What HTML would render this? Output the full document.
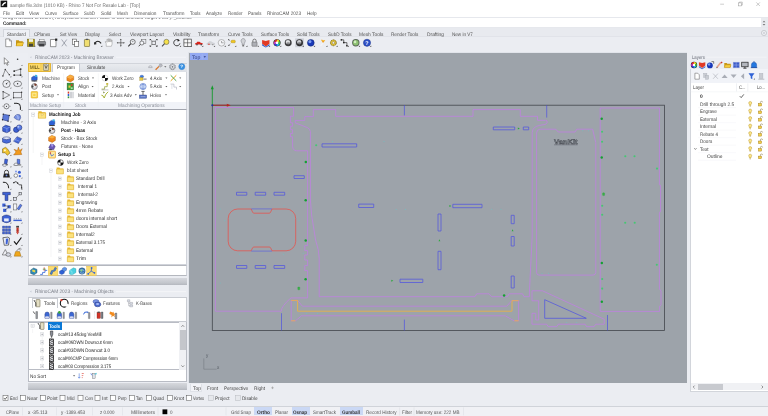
<!DOCTYPE html>
<html><head><meta charset="utf-8"><title>Rhino</title><style>
html,body{margin:0;padding:0}
body{text-rendering:geometricPrecision;width:768px;height:416px;overflow:hidden;position:relative;background:#ebedf2;font-family:"Liberation Sans",sans-serif;color:#333}
.b{position:absolute;box-sizing:border-box}
.t{position:absolute;white-space:nowrap;line-height:1;transform-origin:0 50%;transform:translateY(-50%) scale(.47);font-size:10px}
svg{position:absolute;left:0;top:0}
#all{position:absolute;left:0;top:0;width:768px;height:416px;overflow:hidden;will-change:transform}
</style></head><body><div id="all">
<div class="b" style="left:0px;top:0px;width:768px;height:16.6px;background:#fff;"></div>
<div class="b" style="left:0px;top:16.6px;width:768px;height:1.3px;background:#e6e8ed;"></div>
<div class="b" style="left:0px;top:17.9px;width:768px;height:9.4px;background:#fff;"></div>
<div class="b" style="left:760.6px;top:17.9px;width:7.4px;height:9.4px;background:#e9ebef;"></div>
<div class="b" style="left:0px;top:27.2px;width:768px;height:0.6px;background:#e6e8ed;"></div>
<div class="b" style="left:0;top:17.8px;width:300px;height:3px;overflow:hidden"><span class="t" style="left:3px;top:0.6px;transform:translateY(-50%) scale(.46);color:#555">Drag a window to zoom ( All Dynamic Extents Factor In Out Selected Target 1To1 ): _Extents</span></div>
<div class="b" style="left:0px;top:27.8px;width:768px;height:9px;background:#e8eaef;"></div>
<div class="b" style="left:0px;top:36.4px;width:768px;height:0.6px;background:#e1e3e9;"></div>
<div class="b" style="left:0px;top:37px;width:768px;height:15.6px;background:#ebedf2;"></div>
<div class="b" style="left:2.6px;top:29px;width:27px;height:8.2px;background:#eef0f5;border:0.5px solid #d3d6dc;border-bottom:none"></div>
<div class="b" style="left:190.4px;top:384px;width:12px;height:8px;background:#f3f4f8;border:0.5px solid #dfe2e8;border-top:none"></div>
<div class="b" style="left:0px;top:406.3px;width:768px;height:0.5px;background:#d0d3d9;"></div>
<div class="b" style="left:0px;top:406.8px;width:768px;height:9.2px;background:#f0f1f5;"></div>
<div class="b" style="left:254px;top:407.4px;width:18px;height:7.4px;background:#cad8f5;"></div>
<div class="b" style="left:291.5px;top:407.4px;width:18.0px;height:7.4px;background:#cad8f5;"></div>
<div class="b" style="left:339.5px;top:407.4px;width:23.0px;height:7.4px;background:#cad8f5;"></div>
<div class="b" style="left:0px;top:52.6px;width:27.6px;height:340px;background:#eceef3;"></div>
<div class="b" style="left:28px;top:62.6px;width:158.6px;height:9.6px;background:linear-gradient(#e9ebef,#dcdfe5);border-top:0.5px solid #d2d5db"></div>
<div class="b" style="left:28.2px;top:62.8px;width:23.2px;height:8.8px;background:#fbd968;border:0.6px solid #e3b534;border-radius:.8px"></div>
<div class="b" style="left:52.3px;top:62.8px;width:27.8px;height:9.8px;background:#fff;border:0.5px solid #c8ccd4;border-bottom:none;border-radius:.8px .8px 0 0"></div>
<div class="b" style="left:28px;top:72.2px;width:158.6px;height:29.6px;background:#fff;border-left:0.5px solid #d2d5db;border-right:0.5px solid #d2d5db"></div>
<div class="b" style="left:28px;top:101.8px;width:158.6px;height:7.4px;background:#f1f3f8;border-left:0.5px solid #d2d5db;border-right:0.5px solid #d2d5db"></div>
<div class="b" style="left:28px;top:109px;width:158.6px;height:155.8px;background:#fff;border:0.5px solid #d0d3da;border-top:0.8px solid #a2a5ae"></div>
<div class="b" style="left:28px;top:264.8px;width:158.6px;height:11.4px;background:#fff;border:0.5px solid #d0d3da;border-top:0.6px solid #b4b7be;border-bottom:0.6px solid #b4b7be"></div>
<div class="b" style="left:28px;top:277.6px;width:158.6px;height:7px;background:linear-gradient(#d6d8dd,#c3c6cc 70%,#b4b7be);"></div>
<div class="b" style="left:28px;top:296.9px;width:158.6px;height:25px;background:#fff;border:0.5px solid #c9ccd2"></div>
<div class="b" style="left:32.2px;top:297.6px;width:25.4px;height:10.9px;background:#fff;border:0.5px solid #c9ccd2;border-bottom:none"></div>
<div class="b" style="left:28px;top:321.9px;width:158.6px;height:48.4px;background:#fff;border:0.5px solid #b9bcc4"></div>
<div class="b" style="left:47.6px;top:322.4px;width:14.4px;height:7.6px;background:#0a78d6;"></div>
<div class="b" style="left:179.4px;top:322.4px;width:6.7px;height:47.4px;background:#f0f1f4;"></div>
<div class="b" style="left:179.8px;top:329.6px;width:5.9px;height:20px;background:#c4c6cb;"></div>
<div class="b" style="left:28px;top:370.3px;width:158.6px;height:11.4px;background:#fff;border:0.5px solid #b9bcc4;border-top:none"></div>
<div class="b" style="left:28px;top:383px;width:158.6px;height:6.6px;background:linear-gradient(#d6d8dd,#c3c6cc 70%,#b4b7be);"></div>
<div class="b" style="left:188.2px;top:52.4px;width:499px;height:330.6px;background:#9da3aa;border-left:1.2px solid #e1e4ea;border-top:0.6px solid #e1e4ea"></div>
<div class="b" style="left:189.6px;top:53.4px;width:18.6px;height:6.8px;background:#93a9f2;"></div>
<div class="b" style="left:690.2px;top:68.8px;width:78px;height:322px;background:#fff;border-left:0.5px solid #d2d5db;border-top:0.5px solid #d2d5db"></div>
<div class="b" style="left:690.6px;top:69.2px;width:77.4px;height:13.6px;background:#f1f3f8;"></div>
<div class="b" style="left:690.6px;top:383.4px;width:77.4px;height:7px;background:#f0f1f4;"></div>
<div class="b" style="left:697.6px;top:384.2px;width:25.6px;height:5.6px;background:#c8cacf;"></div>
<div class="b" style="left:690.2px;top:390.6px;width:78px;height:0.5px;background:#d2d5db;"></div>
<svg width="768" height="416" viewBox="0 0 768 416">
<rect x="0.6" y="0.6" width="6.6" height="6.6" fill="#111"/><path d="M1.6 5.8 q1.2-3.6 4.6-3.8 l-0.6 1.6 q-2 .3-2.4 2.2z" fill="#fff"/>
<path d="M720.2 4.2h3.8" stroke="#9a9a9a" stroke-width=".5"/><rect x="738.4" y="2.9" width="3" height="3" fill="none" stroke="#969696" stroke-width=".5"/><path d="M739.3 2.9v-.8h3v3h-.9" fill="none" stroke="#969696" stroke-width=".5"/><path d="M756.3 2.4l3.6 3.6m0-3.6l-3.6 3.6" stroke="#969696" stroke-width=".5"/>
<path d="M762.6 22.3l1.4-1.6 1.4 1.6zM762.6 24l1.4 1.6 1.4-1.6z" fill="#777"/>
<circle cx="764" cy="33" r="2.6" fill="#eceef2" stroke="#b0b3ba" stroke-width=".55"/><circle cx="764" cy="33" r=".8" fill="#b8bbc2"/>
<g transform="translate(8.50 42.80) scale(0.92)"><path d="M-3-4.2h4l2.2 2.2v6.2h-6.2z" fill="#fff" stroke="#555" stroke-width=".6"/><path d="M1-4.2v2.2h2.2" fill="none" stroke="#555" stroke-width=".5"/></g>
<g transform="translate(19.70 42.80) scale(0.92)"><path d="M-4-2.8h3l.8 1h3.6v5.2h-7.4z" fill="#c89612"/><path d="M-4 3.4l1.4-3.8h7l-1.6 3.8z" fill="#f6cc3c" stroke="#a87c08" stroke-width=".4"/></g>
<g transform="translate(31.00 42.80) scale(0.92)"><rect x="-3.8" y="-4" width="7.6" height="8" fill="#b9a21c" stroke="#55500f" stroke-width=".5"/><rect x="-2.2" y="-4" width="4.4" height="3" fill="#f2f2e6"/><rect x="-2.2" y="1" width="4.4" height="3" fill="#44453a"/><path d="M3 4.6l1.6 0 0-1.6z" fill="#555"/></g>
<g transform="translate(41.70 42.80) scale(0.92)"><rect x="-2.6" y="-3.8" width="5.2" height="3" fill="#f4f4f4" stroke="#555" stroke-width=".4"/><rect x="-4.2" y="-1.4" width="8.4" height="4" rx=".6" fill="#8a8c90" stroke="#3c3d40" stroke-width=".5"/><rect x="-2.8" y="1.2" width="5.6" height="2.8" fill="#3d3e42"/></g>
<g transform="translate(53.60 42.80) scale(0.92)"><path d="M-3.4-3.6h4.4l1.6 1.6v6.2h-6z" fill="#fff" stroke="#444" stroke-width=".6"/><rect x="1.6" y="-4.6" width="2.4" height="2.4" fill="#222"/></g>
<g transform="translate(64.20 42.80) scale(0.92)"><path d="M-2.8-3.6l5.4 7.4M2.8-3.6l-5.4 7.4" stroke="#7a7f8c" stroke-width=".7"/></g>
<g transform="translate(75.60 42.80) scale(0.92)"><rect x="-3.4" y="-4" width="4.4" height="5.6" fill="#fff" stroke="#444" stroke-width=".6"/><rect x="-1" y="-1.6" width="4.4" height="5.6" fill="#fff" stroke="#444" stroke-width=".6"/></g>
<g transform="translate(87.00 42.80) scale(0.92)"><rect x="-2.8" y="-3.6" width="5.6" height="7.6" rx=".6" fill="#f1df72" stroke="#5c5520" stroke-width=".6"/><rect x="-1.2" y="-4.4" width="2.4" height="1.4" fill="#555"/></g>
<g transform="translate(98.00 42.80) scale(0.92)"><path d="M-3.6 .6q3.4-4.4 7 0" fill="none" stroke="#222" stroke-width="1.1"/><path d="M-4.4-1l.4 3.2 2.8-1z" fill="#222"/><path d="M3 4.6l1.6 0 0-1.6z" fill="#555"/></g>
<g transform="translate(108.60 42.80) scale(0.92)"><path d="M-2.6 3.8v-3l-1.2-1.8 .8-.6 1.2 1.2v-3.4h1v2.6h.6v-3.2h1v3.2h.6v-2.8h1v3h.5v-2h.9v4.4l-.8 2.4z" fill="#fdfdfd" stroke="#777" stroke-width=".45"/></g>
<g transform="translate(120.80 42.80) scale(0.92)"><path d="M0-3.4v6.8M-3.4 0h6.8" stroke="#444" stroke-width=".7"/><path d="M0-4.4l-1 1.4h2zM0 4.4l-1-1.4h2zM-4.4 0l1.4-1v2zM4.4 0l-1.4-1v2z" fill="#444"/></g>
<g transform="translate(131.80 42.80) scale(0.92)"><circle cx="1" cy="-1" r="2.7" fill="#f4f6fa" stroke="#333" stroke-width=".7"/><path d="M-1 1l-2.8 2.8" stroke="#333" stroke-width="1.1"/><path d="M1-2.4v2M0-1.4h2" stroke="#555" stroke-width=".4"/></g>
<g transform="translate(142.40 42.80) scale(0.92)"><rect x="-1.2" y="-3.8" width="5" height="4.8" fill="none" stroke="#555" stroke-width=".5"/><circle cx="-.6" cy=".2" r="2.2" fill="#f4f6fa" stroke="#333" stroke-width=".6"/><path d="M-2.2 1.8l-1.8 2" stroke="#333" stroke-width=".9"/></g>
<g transform="translate(153.60 42.80) scale(0.92)"><path d="M-3.6-3.6l7.2 7.2M3.6-3.6l-7.2 7.2" stroke="#444" stroke-width=".5"/><rect x="-1.8" y="-1.8" width="3.6" height="3.6" fill="#eceef3" stroke="#333" stroke-width=".6"/><path d="M-4.2-4.2h1.8l-1.8 1.8zM4.2-4.2h-1.8l1.8 1.8zM-4.2 4.2h1.8l-1.8-1.8zM4.2 4.2h-1.8l1.8-1.8z" fill="#222"/></g>
<g transform="translate(165.50 42.80) scale(0.92)"><circle cx="1" cy="-1" r="2.8" fill="#f5e04a" stroke="#555" stroke-width=".6"/><path d="M-1 1l-2.8 2.8" stroke="#444" stroke-width="1.1"/></g>
<g transform="translate(176.80 42.80) scale(0.92)"><path d="M2.4-2.6a3.4 3.4 0 1 0 1 3.2" fill="none" stroke="#222" stroke-width=".9"/><path d="M.6-4.2l2.8 1.4-2.4 1.6z" fill="#222"/><path d="M3 4.6l1.6 0 0-1.6z" fill="#555"/></g>
<g transform="translate(187.60 42.80) scale(0.92)"><rect x="-4" y="-4" width="8" height="8" fill="#f8f8f8" stroke="#333" stroke-width=".7"/><path d="M0-4v8M-4 0h8" stroke="#333" stroke-width=".6"/><path d="M3 4.6l1.6 0 0-1.6z" fill="#555"/></g>
<g transform="translate(199.00 42.80) scale(0.92)"><path d="M-4.2 .6l1.4-.4.8-1.4h2.6l1.2 1.2 2.2.5v1.3h-8.2z" fill="#d8241c"/><circle cx="-2.2" cy="2" r=".8" fill="#333"/><circle cx="2.4" cy="2" r=".8" fill="#333"/><path d="M3 4.6l1.6 0 0-1.6z" fill="#555"/></g>
<g transform="translate(210.80 42.80) scale(0.92)"><path d="M-4.2 .6l1.4-.4.8-1.4h2.6l1.2 1.2 2.2.5v1.3h-8.2z" fill="#d4d6da" stroke="#a8aab0" stroke-width=".3"/><circle cx="-2" cy="1.6" r=".8" fill="#d63228"/><circle cx="2.2" cy="2" r=".7" fill="#888"/><path d="M3 4.6l1.6 0 0-1.6z" fill="#555"/></g>
<g transform="translate(221.50 42.80) scale(0.92)"><circle cx="0" cy="0" r="3.6" fill="#f4f5f8" stroke="#777" stroke-width=".5"/><path d="M0 0h2.4M0-2v2" stroke="#555" stroke-width=".5"/><path d="M3 4.6l1.6 0 0-1.6z" fill="#555"/></g>
<g transform="translate(232.00 42.80) scale(0.92)"><rect x="-1" y="-2.8" width="4.6" height="2.8" rx="1" fill="#f2c81e" stroke="#9a7a08" stroke-width=".4"/><path d="M-3.6-3.4l1.6 1.6M-3.6 2.6l2-1.6" stroke="#666" stroke-width=".5"/><circle cx="-3.6" cy="-3.4" r=".7" fill="#555"/><circle cx="-3.4" cy="2.8" r=".7" fill="#555"/><path d="M3 4.6l1.6 0 0-1.6z" fill="#555"/></g>
<g transform="translate(243.20 42.80) scale(0.92)"><path d="M-2.2-1.6a2.3 2.3 0 1 1 4.4 0q-.2 1-1 2v1.6h-2.4v-1.6q-.8-1-1-2z" fill="#d2d4d8" stroke="#6a6c72" stroke-width=".5"/><rect x="-1" y="2.4" width="2" height="1.6" fill="#777"/><path d="M3 4.6l1.6 0 0-1.6z" fill="#555"/></g>
<g transform="translate(254.50 42.80) scale(0.92)"><path d="M-1.8-.6v-1.6a1.8 1.8 0 0 1 3.6 0v1.6" fill="none" stroke="#555" stroke-width=".8"/><rect x="-2.8" y="-.8" width="5.6" height="4.6" rx=".6" fill="#aeb0b6" stroke="#555" stroke-width=".5"/><path d="M3 4.6l1.6 0 0-1.6z" fill="#555"/></g>
<g transform="translate(265.80 42.80) scale(0.92)"><path d="M-4-3l4 1 4-1v4l-4 3-4-3z" fill="#e23a24"/><path d="M-4 1.4l4 2.8 4-2.8v1.4l-4 2.4-4-2.4z" fill="#2a58c8"/><path d="M3 4.6l1.6 0 0-1.6z" fill="#555"/></g>
<g transform="translate(277.00 42.80) scale(0.92)"><circle r="3.9" fill="#222"/><path d="M0 0L0-3.5A3.5 3.5 0 0 1 3.03-1.75z" fill="#e8e020"/><path d="M0 0L3.03-1.75A3.5 3.5 0 0 1 3.03 1.75z" fill="#40c040"/><path d="M0 0L3.03 1.75A3.5 3.5 0 0 1 0 3.5z" fill="#20b8d8"/><path d="M0 0L0 3.5A3.5 3.5 0 0 1-3.03 1.75z" fill="#3040e0"/><path d="M0 0L-3.03 1.75A3.5 3.5 0 0 1-3.03-1.75z" fill="#c030c8"/><path d="M0 0L-3.03-1.75A3.5 3.5 0 0 1 0-3.5z" fill="#e83030"/><circle r="1.5" fill="#fff"/><path d="M3 4.6l1.6 0 0-1.6z" fill="#555"/></g>
<g transform="translate(288.20 42.80) scale(0.92)"><circle r="3.8" fill="#3c3c3e"/><ellipse cx="-.3" cy="-.9" rx="2.5" ry="2.2" fill="#dedfe2"/><ellipse cx="0" cy=".6" rx="2" ry="1.2" fill="#8a8b8e"/></g>
<g transform="translate(299.50 42.80) scale(0.92)"><rect x="-4.8" y="-4.8" width="9.6" height="9.6" fill="#cdd0d8"/><circle r="3.8" fill="#2e2e30"/><ellipse cx="-.3" cy="-.9" rx="2.4" ry="2.1" fill="#cfd0d4"/><ellipse cx="0" cy=".6" rx="2" ry="1.2" fill="#77787c"/><path d="M3 4.6l1.6 0 0-1.6z" fill="#555"/></g>
<g transform="translate(310.80 42.80) scale(0.92)"><circle r="3.7" fill="#1838b8"/><circle cx="-1" cy="-1.3" r="1.7" fill="#7c9cf0"/><circle r="3.7" fill="none" stroke="#0c1c60" stroke-width=".5"/><path d="M3 4.6l1.6 0 0-1.6z" fill="#555"/></g>
<g transform="translate(323.20 42.80) scale(0.92)"><path d="M-2.4-3.4l4.6.6-2.4 3z" fill="#f0a020"/><path d="M-2.4-3.4l4.6.6-2 .6z" fill="#f8d860"/><path d="M-.4.4l-2.4 3" stroke="#f4f5f8" stroke-width="1.2"/><path d="M3 4.6l1.6 0 0-1.6z" fill="#555"/></g>
<g transform="translate(333.40 42.80) scale(0.92)"><circle r="3.2" fill="#e2c23a" stroke="#6a5a10" stroke-width="1" stroke-dasharray="1.2 .8"/><circle r="1.3" fill="#eceef3" stroke="#6a5a10" stroke-width=".4"/><path d="M3 4.6l1.6 0 0-1.6z" fill="#555"/></g>
<g transform="translate(344.50 42.80) scale(0.92)"><path d="M-3.4-3.2h2.6v3h3.4v3.2" fill="none" stroke="#222" stroke-width=".7"/><rect x="-4.2" y="-4" width="1.6" height="1.6" fill="#222"/><rect x="1.8" y="2.4" width="1.6" height="1.6" fill="#222"/><rect x="-1.6" y="-1" width="1.6" height="1.6" fill="#222"/><path d="M3 4.6l1.6 0 0-1.6z" fill="#555"/></g>
<g transform="translate(355.80 42.80) scale(0.92)"><circle r="4" fill="#5a665a"/><circle r="3" fill="#8cc070"/><circle cx="-.8" cy="-1" r="1.4" fill="#d2ecc0"/><path d="M3 4.6l1.6 0 0-1.6z" fill="#555"/></g>
<g transform="translate(367.00 42.80) scale(0.92)"><circle r="3.9" fill="#2c50c8"/><circle r="3.9" fill="none" stroke="#162c80" stroke-width=".5"/><text x="0" y="2.1" font-size="6" font-weight="bold" text-anchor="middle" fill="#fff" font-family="Liberation Sans,sans-serif">?</text><path d="M3 4.6l1.6 0 0-1.6z" fill="#555"/></g>
<path d="M271.2 387.8h2.6M272.5 386.5v2.6" stroke="#999" stroke-width=".6"/>
<rect x="3.0" y="395.6" width="5" height="5" fill="#fff" stroke="#555" stroke-width=".5"/>
<path d="M4.0 398.1l1.1 1.3 2-2.6" fill="none" stroke="#222" stroke-width=".7"/>
<rect x="20.5" y="395.6" width="5" height="5" fill="#fff" stroke="#555" stroke-width=".5"/>
<rect x="40.5" y="395.6" width="5" height="5" fill="#fff" stroke="#555" stroke-width=".5"/>
<rect x="60.0" y="395.6" width="5" height="5" fill="#fff" stroke="#555" stroke-width=".5"/>
<rect x="78.0" y="395.6" width="5" height="5" fill="#fff" stroke="#555" stroke-width=".5"/>
<rect x="95.0" y="395.6" width="5" height="5" fill="#fff" stroke="#555" stroke-width=".5"/>
<rect x="110.5" y="395.6" width="5" height="5" fill="#fff" stroke="#555" stroke-width=".5"/>
<rect x="129.5" y="395.6" width="5" height="5" fill="#fff" stroke="#555" stroke-width=".5"/>
<rect x="146.5" y="395.6" width="5" height="5" fill="#fff" stroke="#555" stroke-width=".5"/>
<rect x="167.5" y="395.6" width="5" height="5" fill="#fff" stroke="#555" stroke-width=".5"/>
<rect x="186.5" y="395.6" width="5" height="5" fill="#fff" stroke="#555" stroke-width=".5"/>
<rect x="208.5" y="395.6" width="5" height="5" fill="#e6e8ec" stroke="#b8bac0" stroke-width=".5"/>
<rect x="235.5" y="395.6" width="5" height="5" fill="#e6e8ec" stroke="#b8bac0" stroke-width=".5"/>
<rect x="162.5" y="409.4" width="4.8" height="4.8" fill="#000"/>
<path d="M22.5 407.4v8" stroke="#dadce2" stroke-width=".5"/>
<path d="M56.5 407.4v8" stroke="#dadce2" stroke-width=".5"/>
<path d="M92.5 407.4v8" stroke="#dadce2" stroke-width=".5"/>
<path d="M122.5 407.4v8" stroke="#dadce2" stroke-width=".5"/>
<path d="M158 407.4v8" stroke="#dadce2" stroke-width=".5"/>
<path d="M226 407.4v8" stroke="#dadce2" stroke-width=".5"/>
<path d="M399.6 407.4v8" stroke="#dadce2" stroke-width=".5"/>
<path d="M414 407.4v8" stroke="#dadce2" stroke-width=".5"/>
<path d="M463.5 407.4v8" stroke="#dadce2" stroke-width=".5"/>
<g transform="translate(6.50 61.30)"><path d="M-2.2-3.6v6.4l1.6-1.4 1.2 2.6 1-.5-1.2-2.5h2z" fill="#fff" stroke="#333" stroke-width=".5"/></g>
<g transform="translate(17.60 61.30)"><circle cx="0" cy="-2" r=".8" fill="#333"/><path d="M3.4 4.8l1.4 0 0-1.4z" fill="#555"/></g>
<g transform="translate(6.50 72.55)"><path d="M-3.6 3.4l2.4-6.4 4 5.2" fill="none" stroke="#333" stroke-width=".5"/><circle cx="-3.6" cy="3.4" r=".7" fill="#333"/><circle cx="-1.2" cy="-3" r=".7" fill="#333"/><circle cx="2.8" cy="2.2" r=".7" fill="#333"/><path d="M3.4 4.8l1.4 0 0-1.4z" fill="#555"/></g>
<g transform="translate(17.60 72.55)"><path d="M-3.4-1.4q3-1 6.2-2M-3.4 2.6h6.4M3 -3.4v6" fill="none" stroke="#333" stroke-width=".5"/><rect x="-4.2" y="-2.2" width="1.6" height="1.6" fill="#333"/><rect x="2.2" y="-4.2" width="1.6" height="1.6" fill="#333"/><rect x="-4.2" y="1.8" width="1.6" height="1.6" fill="#333"/><rect x="2.2" y="1.8" width="1.6" height="1.6" fill="#333"/><path d="M3.4 4.8l1.4 0 0-1.4z" fill="#555"/></g>
<g transform="translate(6.50 83.80)"><circle r="3.7" fill="none" stroke="#333" stroke-width=".55"/><circle r=".7" fill="#333"/><path d="M0 0l2.4-2.4" stroke="#333" stroke-width=".4"/><path d="M3.4 4.8l1.4 0 0-1.4z" fill="#555"/></g>
<g transform="translate(17.60 83.80)"><ellipse rx="4" ry="2.8" fill="none" stroke="#333" stroke-width=".55"/><circle r=".7" fill="#333"/><path d="M3.4 4.8l1.4 0 0-1.4z" fill="#555"/></g>
<g transform="translate(6.50 95.05)"><path d="M-3.4-3.4l6.6 3.4-6.6 3.6z" fill="none" stroke="#333" stroke-width=".55"/><circle cx="-3.4" cy="-3.4" r=".7" fill="#333"/><circle cx="-3.4" cy="3.6" r=".7" fill="#333"/><path d="M3.4 4.8l1.4 0 0-1.4z" fill="#555"/></g>
<g transform="translate(17.60 95.05)"><rect x="-4" y="-2.8" width="8" height="5.6" fill="none" stroke="#333" stroke-width=".55"/><circle cx="-4" cy="2.8" r=".7" fill="#333"/><circle cx="4" cy="-2.8" r=".7" fill="#333"/><path d="M3.4 4.8l1.4 0 0-1.4z" fill="#555"/></g>
<g transform="translate(6.50 106.30)"><circle r="2.6" fill="none" stroke="#333" stroke-width=".55"/><circle r=".6" fill="#333"/><path d="M-4.2 0h1M3.2 0h1" stroke="#333" stroke-width=".4"/><path d="M3.4 4.8l1.4 0 0-1.4z" fill="#555"/></g>
<g transform="translate(17.60 106.30)"><path d="M-3.6-3h3q3.4 0 3.4 3.4v3.2" fill="none" stroke="#222" stroke-width="1"/><path d="M3.4 4.8l1.4 0 0-1.4z" fill="#555"/></g>
<g transform="translate(6.50 117.55)"><path d="M-3.2-3.4l6 1.2-1.2 5.8-5.6-1.4z" fill="#5a78d8" stroke="#1c2c70" stroke-width=".5"/><circle cx="-3.2" cy="-3.4" r=".7" fill="#222"/><circle cx="2.8" cy="-2.2" r=".7" fill="#222"/><circle cx="1.6" cy="3.6" r=".7" fill="#222"/><circle cx="-4" cy="2.2" r=".7" fill="#222"/><path d="M3.4 4.8l1.4 0 0-1.4z" fill="#555"/></g>
<g transform="translate(17.60 117.55)"><path d="M-3.6 0q2-4.4 6-2.6 1.6 2.6-.6 5.4-3.4-.6-5.4-2.8z" fill="#7a94e4" stroke="#2a3c88" stroke-width=".5"/><path d="M-1-2.6q2 1.4 1.6 4.6" fill="none" stroke="#d8e0fa" stroke-width=".6"/><path d="M3.4 4.8l1.4 0 0-1.4z" fill="#555"/></g>
<g transform="translate(6.50 128.80)"><path d="M-3.8-1.8l3-1.8 4.4 1.4v4.4l-3.2 1.8-4.2-1.6z" fill="#3c60d4" stroke="#142060" stroke-width=".5"/><path d="M-3.8-1.8l4.2 1.4 3.2-1.4M.4-.4v4.4" fill="none" stroke="#a8bcf4" stroke-width=".5"/><path d="M3.4 4.8l1.4 0 0-1.4z" fill="#555"/></g>
<g transform="translate(17.60 128.80)"><circle cx="-1.4" cy="1" r="2.7" fill="#3c60d4" stroke="#142060" stroke-width=".5"/><circle cx="1.6" cy="-1.2" r="2.7" fill="#5a7ce4" stroke="#142060" stroke-width=".5"/><circle cx=".8" cy="-2" r="1" fill="#b8c8f8"/><path d="M3.4 4.8l1.4 0 0-1.4z" fill="#555"/></g>
<g transform="translate(6.50 140.05)"><ellipse cy="-1.6" rx="4" ry="1.6" fill="#dfe6fa" stroke="#223478" stroke-width=".5"/><path d="M-4-1.6v3.6q4 2.6 8 0v-3.6q-4 2.6-8 0z" fill="#4668d8" stroke="#223478" stroke-width=".5"/><path d="M3.4 4.8l1.4 0 0-1.4z" fill="#555"/></g>
<g transform="translate(17.60 140.05)"><path d="M-4 1.2l3.4-4.6 4.6 2-3.2 4.8z" fill="#4668d8" stroke="#223478" stroke-width=".5"/><path d="M-2.4-.6l4.6 2M-.8-2.4l-2.6 4" stroke="#b4c4f6" stroke-width=".4"/><path d="M3.4 4.8l1.4 0 0-1.4z" fill="#555"/></g>
<g transform="translate(6.50 151.30)"><path d="M-4-2.4l3-1.6 2 1.6 2.6 4-2.8 2.4-2.2-2.6-2.6.2z" fill="#f0c430" stroke="#6a5208" stroke-width=".5"/><circle cx="-1.6" cy="-1" r="1.1" fill="#fff6c8"/><path d="M3.4 4.8l1.4 0 0-1.4z" fill="#555"/></g>
<g transform="translate(17.60 151.30)"><path d="M-4 3.6l2.4-3-2-2.6 3.4 1.2 1-3.4 1.2 3.4 2.6-1.8-1.4 3.2 1 2.6z" fill="#f29a1c" stroke="#9a5408" stroke-width=".4"/></g>
<g transform="translate(6.50 162.55)"><path d="M-4 2.2h5.4" stroke="#222" stroke-width=".8"/><path d="M-1.6-3.6l2.8.6-.8 4.4-2.6-.4z" fill="#3c60d4" stroke="#142060" stroke-width=".4"/><ellipse cx="-2" cy="2.6" rx="2" ry="1.2" fill="#e8ecf8" stroke="#333" stroke-width=".4"/><path d="M3.4 4.8l1.4 0 0-1.4z" fill="#555"/></g>
<g transform="translate(17.60 162.55)"><path d="M-4 2.4h7.6" stroke="#222" stroke-width=".7"/><path d="M-.4-3.4l2.6.4v4.4l-2.6-.2z" fill="#5a7ce4" stroke="#142060" stroke-width=".4"/><ellipse cx="-1.6" cy="1.8" rx="1.8" ry="1.3" fill="#eef0f8" stroke="#333" stroke-width=".4"/><path d="M3.4 4.8l1.4 0 0-1.4z" fill="#555"/></g>
<g transform="translate(6.50 173.80)"><path d="M-2-.2v-1.4a2 2 0 0 1 4 0v1.4" fill="none" stroke="#222" stroke-width=".8"/><path d="M-3.4 3.6l.8-4h5.2l.8 4z" fill="#222"/><circle cy="1.6" r=".9" fill="#7a94e4"/><path d="M3.4 4.8l1.4 0 0-1.4z" fill="#555"/></g>
<g transform="translate(17.60 173.80)"><circle cx="-1.8" cy="1.8" r="1.8" fill="#fff" stroke="#333" stroke-width=".5"/><circle cx="1.8" cy="-1.6" r="1.5" fill="#3c60d4"/><circle cx="2.2" cy="2.4" r="1.1" fill="#3c60d4"/><circle cx="-1.6" cy="-2.4" r="1" fill="#8098e8"/><path d="M3.4 4.8l1.4 0 0-1.4z" fill="#555"/></g>
<g transform="translate(6.50 185.05)"><path d="M-3.6-2.8q5.4-.6 5.8 6" fill="none" stroke="#222" stroke-width="1"/><path d="M3.4 4.8l1.4 0 0-1.4z" fill="#555"/></g>
<g transform="translate(17.60 185.05)"><path d="M-3.8-2.4q2.4-2.4 3.8.4t4 1.8v3.2" fill="none" stroke="#444" stroke-width=".9"/><circle cx="-3.8" cy="-2.4" r=".7" fill="#222"/><circle cx="0" cy="-2" r=".7" fill="#222"/><circle cx="4" cy="3" r=".7" fill="#222"/><path d="M3.4 4.8l1.4 0 0-1.4z" fill="#555"/></g>
<g transform="translate(6.50 196.30)"><path d="M-3.8-4h7.6v2.4h-2.4v5.8h-2.8v-5.8h-2.4z" fill="#3c60d4" stroke="#142060" stroke-width=".5"/><path d="M3.4 4.8l1.4 0 0-1.4z" fill="#555"/></g>
<g transform="translate(17.60 196.30)"><path d="M-2.4 2.4l4.8-4.8" stroke="#555" stroke-width=".5"/><rect x="-4.2" y="1" width="3" height="3" fill="#dfe3ee" stroke="#333" stroke-width=".5"/><rect x="1.4" y="-4" width="2.6" height="2.6" fill="#dfe3ee" stroke="#333" stroke-width=".5"/><path d="M3.4 4.8l1.4 0 0-1.4z" fill="#555"/></g>
<g transform="translate(6.50 207.55)"><rect x="-4.2" y="-4" width="3.2" height="3.2" fill="#3c60d4"/><rect x="1" y="-2.4" width="3.2" height="3.2" fill="#3c60d4"/><rect x="-3.4" y="1.2" width="3.2" height="3.2" fill="#3c60d4"/><path d="M-2.6-2.4l5.2 1.6-4.4 3.6" fill="none" stroke="#222" stroke-width=".5"/><path d="M3.4 4.8l1.4 0 0-1.4z" fill="#555"/></g>
<g transform="translate(17.60 207.55)"><rect x="-4" y="-3.6" width="3.2" height="6" fill="#f4f5f8" stroke="#555" stroke-width=".5"/><path d="M-.4 1.2l3-4.6 1.8 1.2-3 4.6z" fill="#5a7ce4" stroke="#142060" stroke-width=".4"/><path d="M3.4 4.8l1.4 0 0-1.4z" fill="#555"/></g>
<g transform="translate(6.50 218.80)"><path d="M-4.2-2.2q4-3.2 8.4 0v4.6q-4.2 3-8.4 0z" fill="#3c60d4" stroke="#142060" stroke-width=".5"/><path d="M-2.4-.4h4.6v3h-4.6z" fill="#e8ecfa"/><path d="M3.4 4.8l1.4 0 0-1.4z" fill="#555"/></g>
<g transform="translate(17.60 218.80)"><path d="M-4.2 1.6h8.4" stroke="#3c60d4" stroke-width="1.4"/><path d="M-3.4-.8v1.4M-1.2-.8v1.4M1-.8v1.4M3.2-.8v1.4" stroke="#555" stroke-width=".4"/><path d="M3.4 4.8l1.4 0 0-1.4z" fill="#555"/></g>
<g transform="translate(6.50 230.05)"><path d="M-4-4h2.2v2.2h-2.2zM-1.1-4h2.2v2.2h-2.2zM1.8-4h2.2v2.2h-2.2zM-4-1.1h2.2v2.2h-2.2zM-1.1-1.1h2.2v2.2h-2.2zM1.8-1.1h2.2v2.2h-2.2zM-4 1.8h2.2v2.2h-2.2zM-1.1 1.8h2.2v2.2h-2.2zM1.8 1.8h2.2v2.2h-2.2z" fill="#4668d8" stroke="#1c2c70" stroke-width=".3"/><path d="M3.4 4.8l1.4 0 0-1.4z" fill="#555"/></g>
<g transform="translate(17.60 230.05)"><rect x="-1.4" y="-4.2" width="2.8" height="1.8" fill="#444"/><rect x="-1" y="-2.4" width="2" height="5" fill="#d83a2c"/><path d="M-1.6-1h3.2M-1.6.6h3.2M-1.6 2.2h3.2" stroke="#7a1c14" stroke-width=".4"/><path d="M-1 2.6h2l-1 1.8z" fill="#d83a2c"/><path d="M3.4 4.8l1.4 0 0-1.4z" fill="#555"/></g>
<g transform="translate(6.50 241.30)"><path d="M-3.6-3.6l5-.6 1.6 1-1 7-4.2.2z" fill="#e9ecf6" stroke="#222" stroke-width=".6"/><path d="M-.6-2.6l2.4-.2-.8 5.6-1.8.1z" fill="#3c60d4"/><path d="M3.4 4.8l1.4 0 0-1.4z" fill="#555"/></g>
<g transform="translate(17.60 241.30)"><path d="M-3.6 0l2.4 3 5-6.8" fill="none" stroke="#1a1a1a" stroke-width="1.2"/><path d="M3.4 4.8l1.4 0 0-1.4z" fill="#555"/></g>
<g transform="translate(6.50 252.55)"><path d="M-4.2 2.4l3-5.4 2.8 5.4z" fill="#f0f1f6" stroke="#333" stroke-width=".5"/><ellipse cx="1.8" cy="2" rx="2.4" ry="1.8" fill="#d5d8e2" stroke="#333" stroke-width=".5"/><path d="M3.4 4.8l1.4 0 0-1.4z" fill="#555"/></g>
<g transform="translate(17.60 252.55)"><path d="M-3.4 3.6l1.4-4.6 4 0 1.4 4.6z" fill="#f0a81c" stroke="#8a5a08" stroke-width=".4"/><path d="M-1-1.6l2.6-2.6 1.4 1.4" fill="none" stroke="#333" stroke-width=".6"/><circle cx="2.6" cy="-3.4" r="1" fill="#f4f5f8" stroke="#444" stroke-width=".4"/><path d="M3.4 4.8l1.4 0 0-1.4z" fill="#555"/></g>
<path d="M30 57.2l1.4-1 0 2z" fill="#c4c8d2"/>
<path d="M116 57.3h70" stroke="#f8f9fc" stroke-width=".6"/>
<path d="M41 63.2v8" stroke="#e3b534" stroke-width=".5"/>
<g transform="translate(46.00 67.20)"><rect x="-2.6" y="-3.2" width="5.2" height="6.4" rx=".5" fill="#d9d4bc" stroke="#6b6242" stroke-width=".5"/><path d="M-1.2-2l1.2 3.2 1.4-3.2" fill="none" stroke="#3c3a2c" stroke-width=".7"/><circle cx="1.6" cy="-2.6" r=".8" fill="#f4f4f4" stroke="#666" stroke-width=".3"/></g>
<g transform="translate(150.40 66.80)"><path d="M-1.8.8q-.2-1.8 1.8-1.8t1.8 1.8z" fill="none" stroke="#8a8d94" stroke-width=".5"/></g>
<g transform="translate(158.60 66.80)"><path d="M-3 3l3.4-3.4" stroke="#d8742a" stroke-width="1.3"/><path d="M.2-.8l1-2.2 2 .4.6 1.8-2.2 1.2z" fill="#b9bcc4" stroke="#777" stroke-width=".3"/></g>
<path d="M164.2 66.3h2.2l-1.1 1.3z" fill="#555"/>
<g transform="translate(172.50 66.80)"><circle r="2.9" fill="none" stroke="#777a80" stroke-width="1" stroke-dasharray="1 .6"/><circle r="2.2" fill="#e8eaee" stroke="#777a80" stroke-width=".5"/><circle r=".9" fill="#777a80"/></g>
<g transform="translate(181.80 66.60)"><circle r="3.1" fill="#3a92e2"/><circle r="3.1" fill="none" stroke="#2a6cc0" stroke-width=".3"/><text y="1.7" font-size="4.8" font-weight="bold" text-anchor="middle" fill="#fff" font-family="Liberation Sans,sans-serif">?</text></g>
<path d="M63.6 73.4v34M98.3 73.4v34" stroke="#eceef2" stroke-width=".5"/>
<g transform="translate(34.40 78.10)"><path d="M-2.8-.6l2.2-1.6 3.4.8v3l-2.4 1.6-3.2-1z" fill="#2f62d6" stroke="#16307a" stroke-width=".4"/><path d="M-2.8 2.2h5.6v1.2h-5.6z" fill="#555"/><path d="M.6-3.4l2.2.4v2l-2.2-.4z" fill="#3ab0e8"/></g>
<g transform="translate(34.40 86.50)"><circle r="2.9" fill="#d8d9de" stroke="#444" stroke-width=".5"/><path d="M0 0L0-2.9A2.9 2.9 0 0 1 2.5-1.45z" fill="#7a3c2a"/><path d="M0 0L-2.5 1.45A2.9 2.9 0 0 1-2.5-1.45z" fill="#444"/><circle r=".9" fill="#f4f4f4"/></g>
<g transform="translate(34.40 94.80)"><rect x="-3.2" y="-3.2" width="6.4" height="6.4" rx=".6" fill="#f8d24a" stroke="#e0a81c" stroke-width=".6"/><rect x="-1.6" y="-1.6" width="3.2" height="3.2" fill="none" stroke="#fff3b8" stroke-width=".6"/></g>
<path d="M57 94.3h2l-1 1.2z" fill="#555"/>
<g transform="translate(70.30 78.10)"><path d="M-3.4-1.2l3.2-2 3.6 1.4v3.6l-3.2 2-3.6-1.4z" fill="#f08a1c" stroke="#a4540a" stroke-width=".4"/><path d="M-3.4-1.2l3.6 1.4 3.2-1.6" fill="none" stroke="#fbd08a" stroke-width=".6"/><path d="M-3.4-1.2l3.2-2 3.6 1.4-3.2 1.8z" fill="#f9b040"/></g>
<g transform="translate(70.30 86.50)"><rect x="-3.2" y="-3.4" width="6.4" height="6.8" fill="#3a9a3a" stroke="#1c5a1c" stroke-width=".4"/><rect x="-1.8" y="-1" width="2" height="2.2" fill="#e8c83c"/><rect x=".6" y="-2.4" width="1.6" height="1.8" fill="#d83a2c"/><rect x=".4" y=".8" width="2" height="1.8" fill="#a8e0a8"/></g>
<g transform="translate(70.30 94.80)"><rect x="-2.6" y="-3.2" width="1.5" height="2" fill="#d83a2c"/><rect x="-2.6" y="-.8" width="1.5" height="2" fill="#2f62d6"/><rect x="-2.6" y="1.6" width="1.5" height="1.8" fill="#3a9a3a"/><path d="M0-3v6.4M1.4-3v6.4M2.8-3v6.4" stroke="#9a9da6" stroke-width=".6"/></g>
<path d="M92 77.6h2l-1 1.2z" fill="#555"/>
<path d="M91.6 86.0h2l-1 1.2z" fill="#555"/>
<g transform="translate(105.00 78.10)"><circle r="3" fill="#fff" stroke="#999" stroke-width=".3"/><path d="M0 0v-3a3 3 0 0 0-3 3zM0 0v3a3 3 0 0 0 3-3z" fill="#111"/></g>
<g transform="translate(105.00 86.50)"><path d="M-3.4 2.6h3v-2.4h2.6v-2.2" fill="none" stroke="#8a9a2c" stroke-width=".7"/><path d="M1.2-3.4h2v1.6h-2z" fill="#c8b428"/><path d="M-3.4 3.4h6.8" stroke="#666" stroke-width=".4"/></g>
<g transform="translate(105.00 94.80)"><path d="M-3.6.4q1.8-.2 2.8 2.8 1.4-4.6 4-6.2" fill="none" stroke="#9aa81c" stroke-width=".85"/><path d="M-1.8-3.2l1.6.6-1.2 1.2z" fill="#5a6a10"/></g>
<path d="M127.5 86.0h2l-1 1.2z" fill="#555"/>
<path d="M134.8 94.3h2l-1 1.2z" fill="#555"/>
<g transform="translate(143.00 78.10)"><ellipse cx="-1.2" cy="-1.6" rx="1.8" ry="1.3" fill="#3c78e0" stroke="#1c3c88" stroke-width=".3"/><rect x="-3.2" y="-.4" width="3.2" height="2.6" fill="#e8c83c" stroke="#8a7410" stroke-width=".3"/><path d="M.4 1h3.2" stroke="#777" stroke-width="1"/></g>
<g transform="translate(143.00 86.50)"><circle r="3.2" fill="#c8d8f6" stroke="#5a78c8" stroke-width=".5"/><path d="M-2.4-1.2q2.4-2 4.8 0M-2 1.6q2 1.6 4.2 0M0-3v6" fill="none" stroke="#3c60c0" stroke-width=".4"/></g>
<g transform="translate(143.00 94.80)"><rect x="-3.6" y=".2" width="7.2" height="3.2" fill="#5a74c4" stroke="#2a3c80" stroke-width=".4"/><path d="M0-3.4v3.6M-1.6-3.4h3.2" stroke="#444" stroke-width=".8"/><path d="M-2.4 1.8h4.8" stroke="#c8d4f4" stroke-width=".5"/></g>
<path d="M165.4 77.6h2l-1 1.2z" fill="#555"/>
<path d="M165.4 86.0h2l-1 1.2z" fill="#555"/>
<path d="M165 94.3h2l-1 1.2z" fill="#555"/>
<g transform="translate(173.50 78.10)"><path d="M-2.8 2.8l5.6-5.6" stroke="#e8a21c" stroke-width="1"/><path d="M-2.8-2.8l5.6 5.6" stroke="#3a9a3a" stroke-width=".9"/></g>
<path d="M179.2 77.6h2l-1 1.2z" fill="#555"/>
<g transform="translate(173.50 86.50)"><path d="M-3-2.4h3.4v3h2.6v2.4" fill="none" stroke="#b4b8c4" stroke-width=".7"/><path d="M-1.6-2.4v4.8" stroke="#c8ccd6" stroke-width=".6"/></g>
<path d="M179.2 86.0h2l-1 1.2z" fill="#555"/>
<path d="M33.2 117v36M42 157v8M51 173v84" stroke="#c9ccd2" stroke-width=".4" stroke-dasharray=".5 .5"/>
<rect x="31.6" y="113.0" width="3.2" height="3.2" fill="#fff" stroke="#c2c5cc" stroke-width=".4"/><path d="M32.300000000000004 114.6h1.8" stroke="#7a7e88" stroke-width=".4"/>
<g transform="translate(42.00 114.60)"><g transform="scale(1.15)"><path d="M-3.2-3h2.6l.8 1h3v5h-6.4z" fill="#e8b830"/><path d="M-3.2-1.4h6.4v4.6h-6.4z" fill="#fbe27e" stroke="#d9a520" stroke-width=".4"/></g></g>
<g transform="translate(42.40 114.80)"><path d="M-1.2-1l2.4.8-2 1.4z" fill="#fff8d0" stroke="#c8961c" stroke-width=".3"/></g>
<g transform="translate(52.00 122.60)"><path d="M-2.8-.6l2.2-1.6 3.4.8v3l-2.4 1.6-3.2-1z" fill="#2f62d6" stroke="#16307a" stroke-width=".4"/><path d="M-2.8 2.4h5.6v1h-5.6z" fill="#444"/><path d="M.6-3.4l2.2.4v2l-2.2-.4z" fill="#3ab0e8"/></g>
<g transform="translate(52.00 130.60)"><circle r="2.9" fill="#d8d9de" stroke="#333" stroke-width=".5"/><path d="M0 0L0-2.9A2.9 2.9 0 0 1 2.5-1.45z" fill="#7a3c2a"/><path d="M0 0L-2.5 1.45A2.9 2.9 0 0 1-2.5-1.45z" fill="#333"/><circle r=".9" fill="#f4f4f4"/></g>
<g transform="translate(52.00 138.60)"><path d="M-3.4-1.2l3.2-2 3.6 1.4v3.6l-3.2 2-3.6-1.4z" fill="#f08a1c" stroke="#a4540a" stroke-width=".4"/><path d="M-3.4-1.2l3.2-2 3.6 1.4-3.2 1.8z" fill="#f9b040"/></g>
<g transform="translate(52.00 146.60)"><path d="M-3.2 1l2-3.6 3 .6 1.4 2-1.6 3.2-3.2-.4z" fill="#6a58b8" stroke="#2c2460" stroke-width=".4"/><path d="M-1.2-2.6l3 .6-1.8 2.8z" fill="#a89cf0"/><path d="M-3.2 2.6h3v1h-3z" fill="#333"/></g>
<rect x="40.4" y="153.0" width="3.2" height="3.2" fill="#fff" stroke="#c2c5cc" stroke-width=".4"/><path d="M41.1 154.6h1.8" stroke="#7a7e88" stroke-width=".4"/>
<g transform="translate(52.00 154.60)"><rect x="-3.4" y="-3.4" width="6.8" height="6.8" rx=".5" fill="#fde9a0" stroke="#e89c1c" stroke-width=".7"/><path d="M-1.8-1.4l1.4 2.8 2.4-1.6" fill="none" stroke="#2f62d6" stroke-width=".7"/><circle cx="-1.6" cy="-1.6" r=".8" fill="#d83a2c"/></g>
<g transform="translate(60.50 162.60)"><circle r="2.9" fill="#fff" stroke="#111" stroke-width=".5"/><path d="M0 0v-2.9a2.9 2.9 0 0 0-2.9 2.9zM0 0v2.9a2.9 2.9 0 0 0 2.9-2.9z" fill="#111"/></g>
<rect x="49.4" y="169.0" width="3.2" height="3.2" fill="#fff" stroke="#c2c5cc" stroke-width=".4"/><path d="M50.1 170.6h1.8" stroke="#7a7e88" stroke-width=".4"/>
<g transform="translate(60.00 170.60)"><g transform="scale(1.05)"><path d="M-3.2-3h2.6l.8 1h3v5h-6.4z" fill="#e8b830"/><path d="M-3.2-1.4h6.4v4.6h-6.4z" fill="#fbe27e" stroke="#d9a520" stroke-width=".4"/></g></g>
<rect x="58.4" y="177.0" width="3.2" height="3.2" fill="#fff" stroke="#c2c5cc" stroke-width=".4"/><path d="M59.1 178.6h1.8M60 177.7v1.8" stroke="#7a7e88" stroke-width=".4"/>
<g transform="translate(70.50 178.60)"><g transform="scale(1.0)"><path d="M-3.2-3h2.6l.8 1h3v5h-6.4z" fill="#e8b830"/><path d="M-3.2-1.4h6.4v4.6h-6.4z" fill="#fbe27e" stroke="#d9a520" stroke-width=".4"/></g></g>
<rect x="58.4" y="185.0" width="3.2" height="3.2" fill="#fff" stroke="#c2c5cc" stroke-width=".4"/><path d="M59.1 186.6h1.8M60 185.7v1.8" stroke="#7a7e88" stroke-width=".4"/>
<g transform="translate(70.50 186.60)"><g transform="scale(1.0)"><path d="M-3.2-3h2.6l.8 1h3v5h-6.4z" fill="#e8b830"/><path d="M-3.2-1.4h6.4v4.6h-6.4z" fill="#fbe27e" stroke="#d9a520" stroke-width=".4"/></g></g>
<rect x="58.4" y="193.0" width="3.2" height="3.2" fill="#fff" stroke="#c2c5cc" stroke-width=".4"/><path d="M59.1 194.6h1.8M60 193.7v1.8" stroke="#7a7e88" stroke-width=".4"/>
<g transform="translate(70.50 194.60)"><g transform="scale(1.0)"><path d="M-3.2-3h2.6l.8 1h3v5h-6.4z" fill="#e8b830"/><path d="M-3.2-1.4h6.4v4.6h-6.4z" fill="#fbe27e" stroke="#d9a520" stroke-width=".4"/></g></g>
<rect x="58.4" y="201.0" width="3.2" height="3.2" fill="#fff" stroke="#c2c5cc" stroke-width=".4"/><path d="M59.1 202.6h1.8M60 201.7v1.8" stroke="#7a7e88" stroke-width=".4"/>
<g transform="translate(70.50 202.60)"><g transform="scale(1.0)"><path d="M-3.2-3h2.6l.8 1h3v5h-6.4z" fill="#e8b830"/><path d="M-3.2-1.4h6.4v4.6h-6.4z" fill="#fbe27e" stroke="#d9a520" stroke-width=".4"/></g></g>
<rect x="58.4" y="209.0" width="3.2" height="3.2" fill="#fff" stroke="#c2c5cc" stroke-width=".4"/><path d="M59.1 210.6h1.8M60 209.7v1.8" stroke="#7a7e88" stroke-width=".4"/>
<g transform="translate(70.50 210.60)"><g transform="scale(1.0)"><path d="M-3.2-3h2.6l.8 1h3v5h-6.4z" fill="#e8b830"/><path d="M-3.2-1.4h6.4v4.6h-6.4z" fill="#fbe27e" stroke="#d9a520" stroke-width=".4"/></g></g>
<rect x="58.4" y="217.0" width="3.2" height="3.2" fill="#fff" stroke="#c2c5cc" stroke-width=".4"/><path d="M59.1 218.6h1.8M60 217.7v1.8" stroke="#7a7e88" stroke-width=".4"/>
<g transform="translate(70.50 218.60)"><g transform="scale(1.0)"><path d="M-3.2-3h2.6l.8 1h3v5h-6.4z" fill="#e8b830"/><path d="M-3.2-1.4h6.4v4.6h-6.4z" fill="#fbe27e" stroke="#d9a520" stroke-width=".4"/></g></g>
<rect x="58.4" y="225.0" width="3.2" height="3.2" fill="#fff" stroke="#c2c5cc" stroke-width=".4"/><path d="M59.1 226.6h1.8M60 225.7v1.8" stroke="#7a7e88" stroke-width=".4"/>
<g transform="translate(70.50 226.60)"><g transform="scale(1.0)"><path d="M-3.2-3h2.6l.8 1h3v5h-6.4z" fill="#e8b830"/><path d="M-3.2-1.4h6.4v4.6h-6.4z" fill="#fbe27e" stroke="#d9a520" stroke-width=".4"/></g></g>
<rect x="58.4" y="233.0" width="3.2" height="3.2" fill="#fff" stroke="#c2c5cc" stroke-width=".4"/><path d="M59.1 234.6h1.8M60 233.7v1.8" stroke="#7a7e88" stroke-width=".4"/>
<g transform="translate(70.50 234.60)"><g transform="scale(1.0)"><path d="M-3.2-3h2.6l.8 1h3v5h-6.4z" fill="#e8b830"/><path d="M-3.2-1.4h6.4v4.6h-6.4z" fill="#fbe27e" stroke="#d9a520" stroke-width=".4"/></g></g>
<rect x="58.4" y="241.0" width="3.2" height="3.2" fill="#fff" stroke="#c2c5cc" stroke-width=".4"/><path d="M59.1 242.6h1.8M60 241.7v1.8" stroke="#7a7e88" stroke-width=".4"/>
<g transform="translate(70.50 242.60)"><g transform="scale(1.0)"><path d="M-3.2-3h2.6l.8 1h3v5h-6.4z" fill="#e8b830"/><path d="M-3.2-1.4h6.4v4.6h-6.4z" fill="#fbe27e" stroke="#d9a520" stroke-width=".4"/></g></g>
<rect x="58.4" y="249.0" width="3.2" height="3.2" fill="#fff" stroke="#c2c5cc" stroke-width=".4"/><path d="M59.1 250.6h1.8M60 249.7v1.8" stroke="#7a7e88" stroke-width=".4"/>
<g transform="translate(70.50 250.60)"><g transform="scale(1.0)"><path d="M-3.2-3h2.6l.8 1h3v5h-6.4z" fill="#e8b830"/><path d="M-3.2-1.4h6.4v4.6h-6.4z" fill="#fbe27e" stroke="#d9a520" stroke-width=".4"/></g></g>
<rect x="58.4" y="257.0" width="3.2" height="3.2" fill="#fff" stroke="#c2c5cc" stroke-width=".4"/><path d="M59.1 258.6h1.8M60 257.70000000000005v1.8" stroke="#7a7e88" stroke-width=".4"/>
<g transform="translate(70.50 258.60)"><g transform="scale(1.0)"><path d="M-3.2-3h2.6l.8 1h3v5h-6.4z" fill="#e8b830"/><path d="M-3.2-1.4h6.4v4.6h-6.4z" fill="#fbe27e" stroke="#d9a520" stroke-width=".4"/></g></g>
<rect x="48.300000000000004" y="266.2" width="9.6" height="9.4" fill="#fbdc72" stroke="#e8b93a" stroke-width=".4"/>
<rect x="86.60000000000001" y="266.2" width="9.6" height="9.4" fill="#fbdc72" stroke="#e8b93a" stroke-width=".4"/>
<g transform="translate(33.80 271.00)"><path d="M-3.2-1l3-2 3.4 1.4v3.4l-3 2-3.4-1.4z" fill="#2f8ab8" stroke="#14405a" stroke-width=".4"/><path d="M-1.6-1.6l3 .8v2.2l-3-.8z" fill="#e8d44a"/></g>
<g transform="translate(43.60 271.00)"><path d="M-3.4 3.4h2.4v-2h2.4v-2h2.2" fill="none" stroke="#2f62d6" stroke-width=".8"/><path d="M.6-3.6v3.4" stroke="#d83a2c" stroke-width=".8"/><path d="M-.8-1.8h3" stroke="#3a9a3a" stroke-width=".7"/></g>
<g transform="translate(53.10 271.00)"><path d="M-3 3l1.4-3.4 2.2-.4 1.2-2.8 1.6.6-1.4 3-2.2.6-1 2.8z" fill="#4a86d8" stroke="#1c3c78" stroke-width=".4"/></g>
<g transform="translate(62.90 271.00)"><path d="M-3.4.2l2.4-1.4 2.4 1v2.4l-2.4 1.4-2.4-1z" fill="#2f62d6" stroke="#16307a" stroke-width=".3"/><path d="M-.4-2.8l2-1 2 .8v2.2l-2 1.2-2-.8z" fill="#5a94e8" stroke="#16307a" stroke-width=".3"/></g>
<g transform="translate(72.60 271.00)"><path d="M-3.2-.6l4-2.6 2.6 1v3.8l-4 2.4-2.6-1z" fill="#4ad0e0" stroke="#2a8a9a" stroke-width=".3"/><path d="M-3.2-.6l2.6 1v3.6" fill="none" stroke="#d8f8fc" stroke-width=".4"/></g>
<g transform="translate(82.00 271.00)"><circle r="3.2" fill="#3a7ab8" stroke="#1c3c5a" stroke-width=".4"/><path d="M-2.4-.6q2.4-2 4.8.4M-2 1.6q2 1.4 4 .2" fill="none" stroke="#c8e0f4" stroke-width=".5"/><circle cx="-.6" cy="-.4" r="1.1" fill="#8ad08a"/></g>
<g transform="translate(91.40 271.00)"><path d="M-3.2 2.8l3-2.6 3.2 1.6M-.2.2l.4-3.4" fill="none" stroke="#2f62d6" stroke-width=".8"/><circle cx=".2" cy="-3" r=".9" fill="#2f62d6"/><circle cx="-3.2" cy="2.8" r=".9" fill="#2f62d6"/><circle cx="3" cy="1.8" r=".9" fill="#2f62d6"/></g>
<path d="M30 291.5l1.4-1 0 2z" fill="#c4c8d2"/>
<path d="M116 291.6h70" stroke="#f8f9fc" stroke-width=".6"/>
<g transform="translate(37.00 303.20)"><rect x="-1" y="-3.6" width="4" height="7.2" rx=".5" fill="#e4dfc4" stroke="#5c553a" stroke-width=".5"/><path d="M-3-3.2q.8 2.4 1.8 2.8v3.6" fill="none" stroke="#333" stroke-width=".8"/></g>
<g transform="translate(64.20 303.20)"><circle r="3.9" fill="none" stroke="#111" stroke-width="1.1"/><path d="M1.6.6h3v3h-3z" fill="#fff"/><circle cx="-2.8" cy="-3" r="1.1" fill="#e03a2c"/></g>
<g transform="translate(96.80 303.20)"><ellipse cx="-.8" cy="-1.6" rx="3" ry="2" fill="#7a94e4" stroke="#2a3c88" stroke-width=".4"/><ellipse cx=".8" cy="1.2" rx="3.2" ry="2.4" fill="#4a68cc" stroke="#1c2c70" stroke-width=".4"/><ellipse cx=".8" cy=".8" rx="1.6" ry="1" fill="#a8bcf4"/></g>
<g transform="translate(130.20 303.20)"><path d="M-2.8-3.4h2.4v2h-2.4zM-.4 -.8h2.8v1.8h-2.8zM-.4 1.8h2.8v1.8h-2.8z" fill="#dfe3ec" stroke="#8a8e98" stroke-width=".4"/><path d="M-1.6-1.4v4h1.2M-1.6.2h1.2" fill="none" stroke="#8a8e98" stroke-width=".4"/></g>
<g transform="translate(36.30 315.00)"><path d="M-.4-3.4h1.6v7h-1.6z" fill="#9da1a8" stroke="#444" stroke-width=".4"/><path d="M-3-3.6q.4 2 2 2.4" fill="none" stroke="#333" stroke-width=".7"/></g>
<g transform="translate(48.50 315.00)"><path d="M-3.6-.6q0-2.4 2.2-2.4t2.2 2.4v3.8h-4.4z" fill="#3c68d4" stroke="#1c2c70" stroke-width=".4"/><ellipse cx="-1.4" cy="2.2" rx="2.2" ry="1" fill="#d8dcf0"/><path d="M2.2-2.8h1.4v6.4h-1.4z" fill="#9da1a8" stroke="#444" stroke-width=".3"/></g>
<g transform="translate(60.80 315.00)"><path d="M-3.6-.6q0-2.4 2.2-2.4t2.2 2.4v3.8h-4.4z" fill="#3c68d4" stroke="#1c2c70" stroke-width=".4"/><ellipse cx="-1.4" cy="2.2" rx="2.2" ry="1" fill="#d8dcf0"/><path d="M2.2-2.8h1.4v6.4h-1.4z" fill="#9da1a8" stroke="#444" stroke-width=".3"/><circle cx="-1.4" cy="-2.6" r="1.3" fill="#3aa83a"/></g>
<g transform="translate(73.00 315.00)"><path d="M-3.6-.6q0-2.4 2.2-2.4t2.2 2.4v3.8h-4.4z" fill="#3c68d4" stroke="#1c2c70" stroke-width=".4"/><ellipse cx="-1.4" cy="2.2" rx="2.2" ry="1" fill="#d8dcf0"/><path d="M2.2-2.8h1.4v6.4h-1.4z" fill="#9da1a8" stroke="#444" stroke-width=".3"/></g>
<g transform="translate(87.00 315.00)"><path d="M-3.4-.6q.4-3 3.4-2.4" fill="none" stroke="#2f62d6" stroke-width="1"/><path d="M.6-4l1.2 1.6-1.8.6z" fill="#2f62d6"/><path d="M1.4-2.4h1.6v6h-1.6z" fill="#9da1a8" stroke="#444" stroke-width=".3"/></g>
<path d="M94.6 311v8" stroke="#d4d7dd" stroke-width=".5"/>
<g transform="translate(100.00 315.00)"><rect x="-3" y="-2.6" width="3.4" height="6" fill="#d03428" stroke="#6a1410" stroke-width=".3"/><path d="M1.2-3h1.8v6.4h-1.8z" fill="#777b84" stroke="#333" stroke-width=".3"/><rect x="-2.4" y="-3.4" width="2.2" height="1.2" fill="#444"/></g>
<g transform="translate(113.60 315.00)"><path d="M-3.6-3.6l3 1 .4-1 .6 2.4 2-.4-1.8 1.6 1 2-2.2-1.2-1.6 1.6.2-2.4-2.2-1z" fill="#f28a1c"/><path d="M1.6-2h1.6v6h-1.6z" fill="#8a8e98" stroke="#444" stroke-width=".3"/></g>
<path d="M32.6 329v4M42.2 337v29" stroke="#c9ccd2" stroke-width=".4" stroke-dasharray=".5 .5"/>
<rect x="31.0" y="324.4" width="3.2" height="3.2" fill="#fff" stroke="#c2c5cc" stroke-width=".4"/><path d="M31.700000000000003 326h1.8" stroke="#7a7e88" stroke-width=".4"/>
<g transform="translate(41.00 326.00)"><rect x="-.6" y="-3.4" width="3.6" height="6.8" rx=".5" fill="#e4dfc4" stroke="#5c553a" stroke-width=".5"/><path d="M-3-3q.8 2.2 1.8 2.6v3.4" fill="none" stroke="#333" stroke-width=".8"/></g>
<rect x="40.6" y="332.79999999999995" width="3.2" height="3.2" fill="#fff" stroke="#c2c5cc" stroke-width=".4"/><path d="M41.300000000000004 334.4h1.8M42.2 333.5v1.8" stroke="#7a7e88" stroke-width=".4"/>
<g transform="translate(51.60 334.40)"><path d="M-1.2-3.4h2.4v3.4l-1.2 3.2-1.2-3.2z" fill="#8a8e98" stroke="#222" stroke-width=".5"/></g>
<rect x="40.6" y="340.79999999999995" width="3.2" height="3.2" fill="#fff" stroke="#c2c5cc" stroke-width=".4"/><path d="M41.300000000000004 342.4h1.8M42.2 341.5v1.8" stroke="#7a7e88" stroke-width=".4"/>
<g transform="translate(51.60 342.40)"><rect x="-2" y="-3.4" width="4" height="6.8" fill="#e8e9ee" stroke="#111" stroke-width=".7"/><path d="M-2-2.2l4 2M-2 0l4 2M-2 2.2l3 1.2M-1-3.4l3 1.4" stroke="#111" stroke-width=".7"/></g>
<rect x="40.6" y="348.79999999999995" width="3.2" height="3.2" fill="#fff" stroke="#c2c5cc" stroke-width=".4"/><path d="M41.300000000000004 350.4h1.8M42.2 349.5v1.8" stroke="#7a7e88" stroke-width=".4"/>
<g transform="translate(51.60 350.40)"><rect x="-2" y="-3.4" width="4" height="6.8" fill="#e8e9ee" stroke="#111" stroke-width=".7"/><path d="M-2-2.2l4 2M-2 0l4 2M-2 2.2l3 1.2M-1-3.4l3 1.4" stroke="#111" stroke-width=".7"/></g>
<rect x="40.6" y="356.79999999999995" width="3.2" height="3.2" fill="#fff" stroke="#c2c5cc" stroke-width=".4"/><path d="M41.300000000000004 358.4h1.8M42.2 357.5v1.8" stroke="#7a7e88" stroke-width=".4"/>
<g transform="translate(51.60 358.40)"><rect x="-2" y="-3.4" width="4" height="6.8" fill="#e8e9ee" stroke="#111" stroke-width=".7"/><path d="M-2-2.2l4 2M-2 0l4 2M-2 2.2l3 1.2M-1-3.4l3 1.4" stroke="#111" stroke-width=".7"/></g>
<rect x="40.6" y="364.59999999999997" width="3.2" height="3.2" fill="#fff" stroke="#c2c5cc" stroke-width=".4"/><path d="M41.300000000000004 366.2h1.8M42.2 365.3v1.8" stroke="#7a7e88" stroke-width=".4"/>
<g transform="translate(51.60 366.20)"><rect x="-2" y="-3.4" width="4" height="6.8" fill="#e8e9ee" stroke="#111" stroke-width=".7"/><path d="M-2-2.2l4 2M-2 0l4 2M-2 2.2l3 1.2M-1-3.4l3 1.4" stroke="#111" stroke-width=".7"/></g>
<path d="M181.4 326.8l1.4-1.5 1.4 1.5M181.4 365.4l1.4 1.5 1.4-1.5" fill="none" stroke="#555" stroke-width=".6"/>
<path d="M73 375.3h2.2l-1.1 1.3z" fill="#555"/>
<g transform="translate(81.40 375.90) scale(0.85)"><path d="M-2.6-3v5.4M-3.8 1.2l1.2 1.6 1.2-1.6" fill="none" stroke="#2f62d6" stroke-width=".6"/><path d="M.4-2.8h2.4M.4-.4h1.8M.4 2h1.2" stroke="#d83a2c" stroke-width=".7"/></g>
<g transform="translate(93.60 375.90) scale(0.85)"><rect x="-1.6" y="-3.2" width="3.4" height="6.4" fill="#dfe3ec" stroke="#555" stroke-width=".4"/><path d="M-3.2-3q.6 2 1.6 2.4" fill="none" stroke="#2f62d6" stroke-width=".8"/><path d="M.6-1.6l2.6-2 .6 1.6z" fill="#3ac0d8"/></g>
<path d="M203.6 56.2h2.4l-1.2 1.5z" fill="#2a3a7a"/><path d="M202.2 54v5.6" stroke="#b4c4f8" stroke-width=".4"/>
<rect x="212.3" y="105.2" width="452.2" height="225.3" fill="none" stroke="#42464c" stroke-width=".8"/>
<path d="M215.4 107.5H293.6V116.2H290.4V122.8H292.6V126.2H290.4V129.6H292.6V133.4H290.4V136.8H292.6V146.2Q292.8 150.6 296.6 150.8H307.6V245.6H304.8V250.6H307.6V255H304.8V260H307.6V265.6H304.8V270.6H307.6V297.9H291Q287 301 283.6 305.6Q281.4 308.4 281.2 311.2H215.4Z" fill="none" stroke="#c678ec" stroke-width=".66" stroke-linejoin="round"/>
<path d="M295.2 120.4H304.8V116.6H313.3V109.6H335.7V116.3H473V109.6H520.3V116.3H537.5V120.3H545.6Q547.4 120.4 547.2 122.2Q547 124 545 124.4L539.6 125.4Q532.6 126.6 532.2 132.6V236L529.4 292V296.7H524L522.5 293.8H509L507.5 296.7H491.7L489 293.8H476.7L475 296.7H319.2V258Q319 250 315.6 240L311.6 215 310.4 200V131.6Q310 128.6 307.4 127.6L295.2 122.8Z" fill="none" stroke="#c678ec" stroke-width=".66" stroke-linejoin="round"/>
<path d="M536.6 133Q536.6 129.3 540 129.2H555.8L558.3 132H575L576.8 129.2H592.6L595.8 142.6V272.6Q595.6 275 593 275.1H539Q536.7 275 536.6 272.6Z" fill="none" stroke="#c678ec" stroke-width=".66" stroke-linejoin="round"/>
<path d="M600.2 108H659.4V184L660.6 186V211L659.4 213V289L661 291V304.6L659.6 306.4V311.4H600.2Z" fill="none" stroke="#c678ec" stroke-width=".66" stroke-linejoin="round"/>
<path d="M291.2 300.4H297.6L302.4 306.2H506.8L511.7 300.6H518.6V320.8H514.2L505.2 315.8H301.6L295.4 320.8H291.2Z" fill="none" stroke="#c678ec" stroke-width=".66" stroke-linejoin="round"/>
<path d="M291.2 300.4H297.6V311.2H512V300.7H518.6M291.2 320.8H295.4M514.4 320.8H518.6" fill="none" stroke="#f0b43c" stroke-width=".8"/>
<path d="M532 290.8H542.5L604.2 319.2V324.2H595.8L594 326.7H586.7L585 324.2H558.3L556.7 326.7H548.3L546.6 324.2H532V313.3H535.8V320H538.7V300.8H532Z" fill="none" stroke="#c678ec" stroke-width=".66" stroke-linejoin="round"/>
<path d="M544.7 299.7V318.3H586.3Z" fill="none" stroke="#464ae6" stroke-width=".66"/>
<path d="M404.4 105.2V115.4" stroke="#4448e6" stroke-width=".62"/>
<path d="M546.7 105.2V117.6" stroke="#4448e6" stroke-width=".62"/>
<path d="M281.5 313.2V330.5" stroke="#4448e6" stroke-width=".62"/>
<path d="M404.4 319.6V330.5" stroke="#4448e6" stroke-width=".62"/>
<path d="M607.5 315V330.5" stroke="#4448e6" stroke-width=".62"/>
<rect x="322" y="143.8" width="34.7" height="3.2" rx=".15" fill="none" stroke="#464ae6" stroke-width=".66"/>
<rect x="294" y="175.7" width="10.3" height="2.8" rx=".15" fill="none" stroke="#464ae6" stroke-width=".66"/>
<rect x="236.5" y="192.3" width="10.3" height="2.9" rx=".15" fill="none" stroke="#464ae6" stroke-width=".66"/>
<rect x="255.2" y="192.3" width="10.5" height="2.9" rx=".15" fill="none" stroke="#464ae6" stroke-width=".66"/>
<rect x="274" y="192.3" width="10.7" height="2.9" rx=".15" fill="none" stroke="#464ae6" stroke-width=".66"/>
<rect x="236.5" y="265.5" width="10.3" height="2.9" rx=".15" fill="none" stroke="#464ae6" stroke-width=".66"/>
<rect x="255.2" y="265.5" width="10.5" height="2.9" rx=".15" fill="none" stroke="#464ae6" stroke-width=".66"/>
<rect x="274" y="265.5" width="10.7" height="2.9" rx=".15" fill="none" stroke="#464ae6" stroke-width=".66"/>
<rect x="358.7" y="204.1" width="15" height="3.4" rx=".15" fill="none" stroke="#464ae6" stroke-width=".66"/>
<rect x="452.8" y="204.3" width="29.2" height="3.4" rx=".15" fill="none" stroke="#464ae6" stroke-width=".66"/>
<rect x="438" y="214" width="3" height="17" rx=".15" fill="none" stroke="#464ae6" stroke-width=".66"/>
<rect x="438" y="251.3" width="3" height="18.4" rx=".15" fill="none" stroke="#464ae6" stroke-width=".66"/>
<rect x="400" y="279.2" width="22.8" height="3.3" rx=".15" fill="none" stroke="#464ae6" stroke-width=".66"/>
<rect x="493.3" y="127" width="21.4" height="2.8" rx=".15" fill="none" stroke="#464ae6" stroke-width=".66"/>
<rect x="523.3" y="127" width="5.4" height="2.8" rx=".15" fill="none" stroke="#464ae6" stroke-width=".66"/>
<rect x="511.2" y="215.3" width="3" height="8.4" rx=".15" fill="none" stroke="#464ae6" stroke-width=".66"/>
<rect x="511.2" y="236.5" width="3" height="9.5" rx=".15" fill="none" stroke="#464ae6" stroke-width=".66"/>
<rect x="511.2" y="276" width="3" height="12" rx=".15" fill="none" stroke="#464ae6" stroke-width=".66"/>
<path d="M237.7 209H251.2L252.6 212.2Q253 213.2 254 213.2H269.2Q270.2 213.2 270.6 212.2L272 209H286.2A9.5 9.5 0 0 1 295.7 218.5V241.3A9.5 9.5 0 0 1 286.2 250.8H272L270.6 247.8Q270.2 247 269.2 247H254Q253 247 252.6 247.8L251.2 250.8H237.7A9.5 9.5 0 0 1 228.2 241.3V218.5A9.5 9.5 0 0 1 237.7 209Z" fill="none" stroke="#e8504a" stroke-width=".75"/>
<path d="M251.2 208.9H272M251.2 251.1H272" stroke="#5458e4" stroke-width=".6"/>
<circle cx="305.8" cy="162" r="1.25" fill="#14a032"/>
<circle cx="305.7" cy="200.2" r="1.25" fill="#14a032"/>
<circle cx="305.7" cy="240.5" r="1.25" fill="#14a032"/>
<circle cx="305.6" cy="279.3" r="1.25" fill="#14a032"/>
<circle cx="601.7" cy="118.8" r="1.25" fill="#14a032"/>
<circle cx="601.7" cy="157.5" r="1.25" fill="#14a032"/>
<circle cx="601.8" cy="263" r="1.25" fill="#14a032"/>
<circle cx="601.8" cy="301.7" r="1.25" fill="#14a032"/>
<circle cx="504.1" cy="295.4" r="1.25" fill="#14a032"/>
<circle cx="316.2" cy="145.3" r="1.05" fill="#44c872"/>
<circle cx="602.1" cy="131.7" r="1.05" fill="#44c872"/>
<circle cx="602.1" cy="141.7" r="1.05" fill="#44c872"/>
<circle cx="625.3" cy="156.3" r="1.05" fill="#44c872"/>
<circle cx="634.5" cy="156.3" r="1.05" fill="#44c872"/>
<circle cx="657" cy="168.6" r="1.05" fill="#44c872"/>
<circle cx="602.2" cy="205.7" r="1.05" fill="#44c872"/>
<circle cx="602.2" cy="214.8" r="1.05" fill="#44c872"/>
<circle cx="625.2" cy="222.7" r="1.05" fill="#44c872"/>
<circle cx="634.7" cy="222.7" r="1.05" fill="#44c872"/>
<circle cx="602.2" cy="279" r="1.05" fill="#44c872"/>
<circle cx="602.2" cy="288.6" r="1.05" fill="#44c872"/>
<circle cx="656.8" cy="264.7" r="1.05" fill="#44c872"/>
<path d="M517.8 127.4l2 1-2 1z" fill="#2aa83a"/>
<path d="M449.4 205l2 1-2 1z" fill="#2aa83a"/>
<path d="M391.3 279.8l2 1-2 1z" fill="#2aa83a"/>
<path d="M438.5 241.2l.9-2 .9 2z" fill="#2aa83a"/>
<path d="M511.70000000000005 231.3l.9-2 .9 2z" fill="#2aa83a"/>
<rect x="602.6" y="192.79999999999998" width="2" height="2.8" rx=".6" fill="#3aae48" stroke="#2aa83a" stroke-width=".3"/>
<rect x="297.8" y="287.0" width="2" height="2.8" rx=".6" fill="#3aae48" stroke="#2aa83a" stroke-width=".3"/>
<text x="554" y="144" font-size="6.6" font-weight="bold" font-family="Liberation Sans,sans-serif" fill="none" stroke="#41454c" stroke-width=".45" textLength="23.6" lengthAdjust="spacingAndGlyphs">VanKit</text>
<path d="M554 144.8h23.6" stroke="#41454c" stroke-width=".4"/>
<path d="M212.3 105.2V88" stroke="#149a2c" stroke-width=".9"/><path d="M212.3 85.2l-1.5 4h3z" fill="#149a2c"/><path d="M212.3 105.2H228" stroke="#b42820" stroke-width=".9"/><path d="M230.8 105.2l-4-1.5v3z" fill="#b42820"/><circle cx="212.3" cy="105.2" r="1" fill="#2030a8"/>
<path d="M203.8 358.4V369.2H216.6" fill="none" stroke="#6e747c" stroke-width=".5"/>
<circle cx="396.2" cy="209.5" r=".55" fill="#58d2d2" opacity=".55"/>
<circle cx="405.5" cy="209.5" r=".55" fill="#58d2d2" opacity=".55"/>
<circle cx="491.7" cy="209.3" r=".55" fill="#58d2d2" opacity=".55"/>
<circle cx="501" cy="209.3" r=".55" fill="#58d2d2" opacity=".55"/>
<circle cx="220.2" cy="209" r=".55" fill="#58d2d2" opacity=".55"/>
<circle cx="224.8" cy="220.7" r=".55" fill="#58d2d2" opacity=".55"/>
<circle cx="239" cy="205.7" r=".55" fill="#58d2d2" opacity=".55"/>
<circle cx="284" cy="205.7" r=".55" fill="#58d2d2" opacity=".55"/>
<circle cx="299" cy="220.7" r=".55" fill="#58d2d2" opacity=".55"/>
<circle cx="262.3" cy="196.5" r=".55" fill="#58d2d2" opacity=".55"/>
<circle cx="239.5" cy="254.2" r=".55" fill="#58d2d2" opacity=".55"/>
<circle cx="283.7" cy="254.2" r=".55" fill="#58d2d2" opacity=".55"/>
<circle cx="220.2" cy="283" r=".55" fill="#58d2d2" opacity=".55"/>
<circle cx="262.3" cy="263" r=".55" fill="#58d2d2" opacity=".55"/>
<circle cx="303.2" cy="253.3" r=".55" fill="#58d2d2" opacity=".55"/>
<circle cx="306.7" cy="313.5" r=".55" fill="#58d2d2" opacity=".55"/>
<circle cx="317.5" cy="313.5" r=".55" fill="#58d2d2" opacity=".55"/>
<circle cx="566.7" cy="322.5" r=".55" fill="#58d2d2" opacity=".55"/>
<circle cx="576.7" cy="322.5" r=".55" fill="#58d2d2" opacity=".55"/>
<circle cx="542" cy="273.3" r=".55" fill="#58d2d2" opacity=".55"/>
<circle cx="548.7" cy="273.3" r=".55" fill="#58d2d2" opacity=".55"/>
<circle cx="582.8" cy="130.8" r=".55" fill="#58d2d2" opacity=".55"/>
<circle cx="588.7" cy="130.8" r=".55" fill="#58d2d2" opacity=".55"/>
<circle cx="498" cy="125.6" r=".55" fill="#58d2d2" opacity=".55"/>
<circle cx="332.5" cy="141.6" r=".55" fill="#58d2d2" opacity=".55"/>
<circle cx="384" cy="141.6" r=".55" fill="#58d2d2" opacity=".55"/>
<path d="M706.5 57.2h60" stroke="#f8f9fc" stroke-width=".6"/>
<g transform="translate(694.00 65.00)"><circle r="3.2" fill="#222"/><path d="M0 0L0-2.9A2.9 2.9 0 0 1 2.51-1.45z" fill="#e8e020"/><path d="M0 0L2.51-1.45A2.9 2.9 0 0 1 2.51 1.45z" fill="#40c040"/><path d="M0 0L2.51 1.45A2.9 2.9 0 0 1 0 2.9z" fill="#20b8d8"/><path d="M0 0L0 2.9A2.9 2.9 0 0 1-2.51 1.45z" fill="#3040e0"/><path d="M0 0L-2.51 1.45A2.9 2.9 0 0 1-2.51-1.45z" fill="#c030c8"/><path d="M0 0L-2.51-1.45A2.9 2.9 0 0 1 0-2.9z" fill="#e83030"/><circle r="1.2" fill="#fff"/></g>
<g transform="translate(702.10 65.00)"><path d="M-3.2-2.8l3.2.8 3.2-.8v3.4l-3.2 2.4-3.2-2.4z" fill="#e23a24"/><path d="M-3.2 1l3.2 2.4 3.2-2.4v1.2l-3.2 2-3.2-2z" fill="#2a58c8"/></g>
<g transform="translate(710.30 65.00)"><circle cx="-.4" cy=".4" r="2.9" fill="#1838b8"/><circle cx="-1.2" cy="-.6" r="1.2" fill="#7c9cf0"/><path d="M1.2-3.4h2.2v2.2" fill="none" stroke="#333" stroke-width=".6"/></g>
<g transform="translate(719.20 65.00)"><path d="M-2.6 2.8l4-5" stroke="#e8a48c" stroke-width="1.6"/><path d="M1.2-2.6l1.4-1 .8 1-1.2 1.2z" fill="#c8342a"/><path d="M-3 3.2l.8-1.4.8.8z" fill="#555"/></g>
<g transform="translate(727.50 65.00)"><path d="M-3.2-2h2.4l.6.8h3.4v3.6h-6.4z" fill="#c89612"/><path d="M-3.2 2.6l1-2.8h5.8l-1.2 2.8z" fill="#f6cc3c" stroke="#a87c08" stroke-width=".3"/></g>
<g transform="translate(736.20 65.00)"><rect x="-3" y="-2.8" width="6" height="5.6" fill="#3a5ac8" stroke="#8a9ad8" stroke-width=".5"/><path d="M-3 0h6M0-2.8v5.6" stroke="#a8b8f0" stroke-width=".5"/></g>
<g transform="translate(744.90 65.00)"><rect x="-3.2" y="-2.8" width="6.4" height="4.6" fill="#b4b7be" stroke="#222" stroke-width=".7"/><path d="M-1.6 3.2h3.2M0 1.8v1.4" stroke="#222" stroke-width=".8"/></g>
<g transform="translate(754.00 65.00)"><path d="M-2.6 2.4v-2.6a2.6 2.6 0 0 1 5.2 0v2.6z" fill="#2478e0" stroke="#1448a0" stroke-width=".4"/><path d="M-3.2 2.6h6.4" stroke="#1448a0" stroke-width=".8"/><circle cy="-3.2" r=".6" fill="#1448a0"/></g>
<g transform="translate(697.10 76.20)"><path d="M-2.2-3h2.8l1.6 1.6v4.4h-4.4z" fill="#fff" stroke="#555" stroke-width=".5"/></g>
<g transform="translate(706.30 76.20)"><rect x="-2.6" y="-2.8" width="3.2" height="4" fill="#c9ccd3" stroke="#a9adb6" stroke-width=".4"/><rect x="-.8" y="-1" width="3.2" height="4" fill="#c9ccd3" stroke="#a9adb6" stroke-width=".4"/></g>
<g transform="translate(715.50 76.20)"><path d="M-2.4-2.6l4.8 5.2M2.4-2.6l-4.8 5.2" stroke="#a9adb6" stroke-width=".6"/></g>
<g transform="translate(724.60 76.20)"><path d="M-3 1.8l3-3.6 3 3.6z" fill="#a9adb6"/></g>
<g transform="translate(733.60 76.20)"><path d="M-3-1.8l3 3.6 3-3.6z" fill="#a9adb6"/></g>
<g transform="translate(742.50 76.20)"><path d="M1.6-3l-3.2 3 3.2 3z" fill="#a9adb6"/></g>
<g transform="translate(751.50 76.20)"><path d="M-3-3h6l-2.2 3v3l-1.6-1v-2z" fill="#2f62d6"/><path d="M2 3.4l1.4 0 0-1.4z" fill="#444"/></g>
<g transform="translate(761.30 76.20)"><rect x="-2" y="-2.8" width="3.6" height="5" fill="#c9ccd3" stroke="#a9adb6" stroke-width=".4"/><path d="M-3 3h6" stroke="#a9adb6" stroke-width=".8"/></g>
<path d="M690.6 91.8h77.4" stroke="#eceef2" stroke-width=".4"/><path d="M736.5 83.4v8M747.8 83.4v8" stroke="#dfe2e8" stroke-width=".5"/>
<path d="M739.8 96.2l1.4 1.4 2.6-3.2" fill="none" stroke="#222" stroke-width=".7"/>
<g transform="translate(750.20 103.80)"><path d="M-1.5-.8a1.5 1.5 0 1 1 3 0q-.1.7-.7 1.3v1h-1.6v-1q-.6-.6-.7-1.3z" fill="#fbe68a" stroke="#b8901c" stroke-width=".45"/><path d="M-.6 2.4h1.2" stroke="#8a6a10" stroke-width=".5"/></g>
<g transform="translate(760.20 103.80)"><rect x="-1.8" y="-.4" width="3.2" height="2.6" fill="#f4d04a" stroke="#9a7410" stroke-width=".4"/><path d="M.2-.4v-1a1.1 1.1 0 0 1 2.2 0" fill="none" stroke="#7a6a3a" stroke-width=".5"/></g>
<path d="M698 107.55h38" stroke="#f0f1f4" stroke-width=".4"/>
<g transform="translate(750.20 111.40)"><path d="M-1.5-.8a1.5 1.5 0 1 1 3 0q-.1.7-.7 1.3v1h-1.6v-1q-.6-.6-.7-1.3z" fill="#fbe68a" stroke="#b8901c" stroke-width=".45"/><path d="M-.6 2.4h1.2" stroke="#8a6a10" stroke-width=".5"/></g>
<g transform="translate(760.20 111.40)"><rect x="-1.8" y="-.4" width="3.2" height="2.6" fill="#f4d04a" stroke="#9a7410" stroke-width=".4"/><path d="M.2-.4v-1a1.1 1.1 0 0 1 2.2 0" fill="none" stroke="#7a6a3a" stroke-width=".5"/></g>
<path d="M698 115.15h38" stroke="#f0f1f4" stroke-width=".4"/>
<g transform="translate(750.20 118.90)"><path d="M-1.5-.8a1.5 1.5 0 1 1 3 0q-.1.7-.7 1.3v1h-1.6v-1q-.6-.6-.7-1.3z" fill="#fbe68a" stroke="#b8901c" stroke-width=".45"/><path d="M-.6 2.4h1.2" stroke="#8a6a10" stroke-width=".5"/></g>
<g transform="translate(760.20 118.90)"><rect x="-1.8" y="-.4" width="3.2" height="2.6" fill="#f4d04a" stroke="#9a7410" stroke-width=".4"/><path d="M.2-.4v-1a1.1 1.1 0 0 1 2.2 0" fill="none" stroke="#7a6a3a" stroke-width=".5"/></g>
<path d="M698 122.65h38" stroke="#f0f1f4" stroke-width=".4"/>
<g transform="translate(750.20 126.40)"><path d="M-1.5-.8a1.5 1.5 0 1 1 3 0q-.1.7-.7 1.3v1h-1.6v-1q-.6-.6-.7-1.3z" fill="#fbe68a" stroke="#b8901c" stroke-width=".45"/><path d="M-.6 2.4h1.2" stroke="#8a6a10" stroke-width=".5"/></g>
<g transform="translate(760.20 126.40)"><rect x="-1.8" y="-.4" width="3.2" height="2.6" fill="#f4d04a" stroke="#9a7410" stroke-width=".4"/><path d="M.2-.4v-1a1.1 1.1 0 0 1 2.2 0" fill="none" stroke="#7a6a3a" stroke-width=".5"/></g>
<path d="M698 130.15h38" stroke="#f0f1f4" stroke-width=".4"/>
<g transform="translate(750.20 133.90)"><path d="M-1.5-.8a1.5 1.5 0 1 1 3 0q-.1.7-.7 1.3v1h-1.6v-1q-.6-.6-.7-1.3z" fill="#fbe68a" stroke="#b8901c" stroke-width=".45"/><path d="M-.6 2.4h1.2" stroke="#8a6a10" stroke-width=".5"/></g>
<g transform="translate(760.20 133.90)"><rect x="-1.8" y="-.4" width="3.2" height="2.6" fill="#f4d04a" stroke="#9a7410" stroke-width=".4"/><path d="M.2-.4v-1a1.1 1.1 0 0 1 2.2 0" fill="none" stroke="#7a6a3a" stroke-width=".5"/></g>
<path d="M698 137.65h38" stroke="#f0f1f4" stroke-width=".4"/>
<g transform="translate(750.20 141.40)"><path d="M-1.5-.8a1.5 1.5 0 1 1 3 0q-.1.7-.7 1.3v1h-1.6v-1q-.6-.6-.7-1.3z" fill="#fbe68a" stroke="#b8901c" stroke-width=".45"/><path d="M-.6 2.4h1.2" stroke="#8a6a10" stroke-width=".5"/></g>
<g transform="translate(760.20 141.40)"><rect x="-1.8" y="-.4" width="3.2" height="2.6" fill="#f4d04a" stroke="#9a7410" stroke-width=".4"/><path d="M.2-.4v-1a1.1 1.1 0 0 1 2.2 0" fill="none" stroke="#7a6a3a" stroke-width=".5"/></g>
<path d="M698 145.15h38" stroke="#f0f1f4" stroke-width=".4"/>
<g transform="translate(750.20 148.90)"><path d="M-1.5-.8a1.5 1.5 0 1 1 3 0q-.1.7-.7 1.3v1h-1.6v-1q-.6-.6-.7-1.3z" fill="#fbe68a" stroke="#b8901c" stroke-width=".45"/><path d="M-.6 2.4h1.2" stroke="#8a6a10" stroke-width=".5"/></g>
<g transform="translate(760.20 148.90)"><rect x="-1.8" y="-.4" width="3.2" height="2.6" fill="#f4d04a" stroke="#9a7410" stroke-width=".4"/><path d="M.2-.4v-1a1.1 1.1 0 0 1 2.2 0" fill="none" stroke="#7a6a3a" stroke-width=".5"/></g>
<path d="M698 152.65h38" stroke="#f0f1f4" stroke-width=".4"/>
<g transform="translate(750.20 156.50)"><path d="M-1.5-.8a1.5 1.5 0 1 1 3 0q-.1.7-.7 1.3v1h-1.6v-1q-.6-.6-.7-1.3z" fill="#fbe68a" stroke="#b8901c" stroke-width=".45"/><path d="M-.6 2.4h1.2" stroke="#8a6a10" stroke-width=".5"/></g>
<g transform="translate(760.20 156.50)"><rect x="-1.8" y="-.4" width="3.2" height="2.6" fill="#f4d04a" stroke="#9a7410" stroke-width=".4"/><path d="M.2-.4v-1a1.1 1.1 0 0 1 2.2 0" fill="none" stroke="#7a6a3a" stroke-width=".5"/></g>
<path d="M698 160.25h38" stroke="#f0f1f4" stroke-width=".4"/>
<path d="M694.2 148.1l1.2 1.4 1.2-1.4" fill="none" stroke="#555" stroke-width=".6"/>
<path d="M694.6 385.6l-1.4 1.4 1.4 1.4M761.6 385.6l1.4 1.4-1.4 1.4" fill="none" stroke="#555" stroke-width=".6"/>
</svg>
<span class="t" style="left:10.00px;top:5.50px;transform:translateY(-50%) scale(0.462,0.510);color:#6a6a6a;">sample file.3dm (1010 KB) - Rhino 7 Not For Resale Lab - [Top]</span>
<span class="t" style="left:3.00px;top:13.80px;transform:translateY(-50%) scale(0.434,0.510);color:#505050;">File</span>
<span class="t" style="left:15.50px;top:13.80px;transform:translateY(-50%) scale(0.464,0.510);color:#505050;">Edit</span>
<span class="t" style="left:29.00px;top:13.80px;transform:translateY(-50%) scale(0.475,0.510);color:#505050;">View</span>
<span class="t" style="left:45.00px;top:13.80px;transform:translateY(-50%) scale(0.450,0.510);color:#505050;">Curve</span>
<span class="t" style="left:63.00px;top:13.80px;transform:translateY(-50%) scale(0.450,0.510);color:#505050;">Surface</span>
<span class="t" style="left:84.00px;top:13.80px;transform:translateY(-50%) scale(0.440,0.510);color:#505050;">SubD</span>
<span class="t" style="left:101.00px;top:13.80px;transform:translateY(-50%) scale(0.472,0.510);color:#505050;">Solid</span>
<span class="t" style="left:117.00px;top:13.80px;transform:translateY(-50%) scale(0.450,0.510);color:#505050;">Mesh</span>
<span class="t" style="left:134.00px;top:13.80px;transform:translateY(-50%) scale(0.476,0.510);color:#505050;">Dimension</span>
<span class="t" style="left:162.50px;top:13.80px;transform:translateY(-50%) scale(0.476,0.510);color:#505050;">Transform</span>
<span class="t" style="left:189.50px;top:13.80px;transform:translateY(-50%) scale(0.450,0.510);color:#505050;">Tools</span>
<span class="t" style="left:206.00px;top:13.80px;transform:translateY(-50%) scale(0.450,0.510);color:#505050;">Analyze</span>
<span class="t" style="left:227.50px;top:13.80px;transform:translateY(-50%) scale(0.442,0.510);color:#505050;">Render</span>
<span class="t" style="left:248.00px;top:13.80px;transform:translateY(-50%) scale(0.442,0.510);color:#505050;">Panels</span>
<span class="t" style="left:267.00px;top:13.80px;transform:translateY(-50%) scale(0.463,0.510);color:#505050;">RhinoCAM 2023</span>
<span class="t" style="left:307.00px;top:13.80px;transform:translateY(-50%) scale(0.462,0.510);color:#505050;">Help</span>
<span class="t" style="left:3.00px;top:24.20px;transform:translateY(-50%) scale(0.450,0.510);font-weight:bold;color:#222;">Command:</span>
<span class="t" style="left:6.90px;top:34.70px;transform:translateY(-50%) scale(0.461,0.510);color:#505050;">Standard</span>
<span class="t" style="left:34.40px;top:34.70px;transform:translateY(-50%) scale(0.429,0.510);color:#505050;">CPlanes</span>
<span class="t" style="left:59.80px;top:34.70px;transform:translateY(-50%) scale(0.435,0.510);color:#505050;">Set View</span>
<span class="t" style="left:85.30px;top:34.70px;transform:translateY(-50%) scale(0.457,0.510);color:#505050;">Display</span>
<span class="t" style="left:109.00px;top:34.70px;transform:translateY(-50%) scale(0.432,0.510);color:#505050;">Select</span>
<span class="t" style="left:130.30px;top:34.70px;transform:translateY(-50%) scale(0.471,0.510);color:#505050;">Viewport Layout</span>
<span class="t" style="left:172.50px;top:34.70px;transform:translateY(-50%) scale(0.487,0.510);color:#505050;">Visibility</span>
<span class="t" style="left:198.30px;top:34.70px;transform:translateY(-50%) scale(0.469,0.510);color:#505050;">Transform</span>
<span class="t" style="left:228.30px;top:34.70px;transform:translateY(-50%) scale(0.466,0.510);color:#505050;">Curve Tools</span>
<span class="t" style="left:260.80px;top:34.70px;transform:translateY(-50%) scale(0.464,0.510);color:#505050;">Surface Tools</span>
<span class="t" style="left:297.00px;top:34.70px;transform:translateY(-50%) scale(0.467,0.510);color:#505050;">Solid Tools</span>
<span class="t" style="left:327.80px;top:34.70px;transform:translateY(-50%) scale(0.461,0.510);color:#505050;">SubD Tools</span>
<span class="t" style="left:359.00px;top:34.70px;transform:translateY(-50%) scale(0.482,0.510);color:#505050;">Mesh Tools</span>
<span class="t" style="left:391.00px;top:34.70px;transform:translateY(-50%) scale(0.465,0.510);color:#505050;">Render Tools</span>
<span class="t" style="left:427.00px;top:34.70px;transform:translateY(-50%) scale(0.486,0.510);color:#505050;">Drafting</span>
<span class="t" style="left:452.00px;top:34.70px;transform:translateY(-50%) scale(0.456,0.510);color:#505050;">New in V7</span>
<span class="t" style="left:193.00px;top:388.60px;transform:translateY(-50%) scale(0.496,0.510);color:#444;">Top</span>
<span class="t" style="left:207.00px;top:388.60px;transform:translateY(-50%) scale(0.471,0.510);color:#444;">Front</span>
<span class="t" style="left:224.00px;top:388.60px;transform:translateY(-50%) scale(0.459,0.510);color:#444;">Perspective</span>
<span class="t" style="left:254.00px;top:388.60px;transform:translateY(-50%) scale(0.471,0.510);color:#444;">Right</span>
<span class="t" style="left:10.00px;top:398.80px;transform:translateY(-50%) scale(0.422,0.510);color:#444;">End</span>
<span class="t" style="left:27.00px;top:398.80px;transform:translateY(-50%) scale(0.484,0.510);color:#444;">Near</span>
<span class="t" style="left:47.00px;top:398.80px;transform:translateY(-50%) scale(0.461,0.510);color:#444;">Point</span>
<span class="t" style="left:67.00px;top:398.80px;transform:translateY(-50%) scale(0.465,0.510);color:#444;">Mid</span>
<span class="t" style="left:85.00px;top:398.80px;transform:translateY(-50%) scale(0.436,0.510);color:#444;">Cen</span>
<span class="t" style="left:102.00px;top:398.80px;transform:translateY(-50%) scale(0.495,0.510);color:#444;">Int</span>
<span class="t" style="left:117.50px;top:398.80px;transform:translateY(-50%) scale(0.402,0.510);color:#444;">Perp</span>
<span class="t" style="left:136.00px;top:398.80px;transform:translateY(-50%) scale(0.403,0.510);color:#444;">Tan</span>
<span class="t" style="left:153.00px;top:398.80px;transform:translateY(-50%) scale(0.450,0.510);color:#444;">Quad</span>
<span class="t" style="left:174.00px;top:398.80px;transform:translateY(-50%) scale(0.486,0.510);color:#444;">Knot</span>
<span class="t" style="left:193.00px;top:398.80px;transform:translateY(-50%) scale(0.390,0.510);color:#444;">Vertex</span>
<span class="t" style="left:215.00px;top:398.80px;transform:translateY(-50%) scale(0.466,0.510);color:#444;">Project</span>
<span class="t" style="left:242.00px;top:398.80px;transform:translateY(-50%) scale(0.465,0.510);color:#444;">Disable</span>
<span class="t" style="left:5.50px;top:412.60px;transform:translateY(-50%) scale(0.396,0.510);color:#555;">CPlane</span>
<span class="t" style="left:28.00px;top:412.60px;transform:translateY(-50%) scale(0.476,0.510);color:#555;">x -35.113</span>
<span class="t" style="left:61.00px;top:412.60px;transform:translateY(-50%) scale(0.454,0.510);color:#555;">y -1389.453</span>
<span class="t" style="left:100.00px;top:412.60px;transform:translateY(-50%) scale(0.442,0.510);color:#555;">z 0.000</span>
<span class="t" style="left:131.00px;top:412.60px;transform:translateY(-50%) scale(0.502,0.510);color:#555;">Millimeters</span>
<span class="t" style="left:169.50px;top:412.60px;transform:translateY(-50%) scale(0.450,0.510);color:#555;">0</span>
<span class="t" style="left:231.00px;top:412.60px;transform:translateY(-50%) scale(0.444,0.510);color:#555;">Grid Snap</span>
<span class="t" style="left:256.50px;top:412.60px;transform:translateY(-50%) scale(0.478,0.510);font-weight:bold;color:#333;">Ortho</span>
<span class="t" style="left:275.00px;top:412.60px;transform:translateY(-50%) scale(0.450,0.510);color:#555;">Planar</span>
<span class="t" style="left:293.00px;top:412.60px;transform:translateY(-50%) scale(0.450,0.510);font-weight:bold;color:#333;">Osnap</span>
<span class="t" style="left:313.00px;top:412.60px;transform:translateY(-50%) scale(0.448,0.510);color:#555;">SmartTrack</span>
<span class="t" style="left:341.50px;top:412.60px;transform:translateY(-50%) scale(0.450,0.510);font-weight:bold;color:#333;">Gumball</span>
<span class="t" style="left:366.00px;top:412.60px;transform:translateY(-50%) scale(0.461,0.510);color:#555;">Record History</span>
<span class="t" style="left:402.00px;top:412.60px;transform:translateY(-50%) scale(0.450,0.510);color:#555;">Filter</span>
<span class="t" style="left:416.00px;top:412.60px;transform:translateY(-50%) scale(0.458,0.510);color:#555;">Memory use: 222 MB</span>
<span class="t" style="left:35.20px;top:58.00px;transform:translateY(-50%) scale(0.471,0.510);color:#777b84;">RhinoCAM 2023 - Machining Browser</span>
<span class="t" style="left:30.40px;top:68.20px;transform:translateY(-50%) scale(0.432,0.510);color:#3a2e04;">MILL</span>
<span class="t" style="left:57.20px;top:68.40px;transform:translateY(-50%) scale(0.469,0.510);color:#444;">Program</span>
<span class="t" style="left:86.60px;top:68.40px;transform:translateY(-50%) scale(0.473,0.510);color:#444;">Simulate</span>
<span class="t" style="left:42.00px;top:78.90px;transform:translateY(-50%) scale(0.471,0.510);color:#444;">Machine</span>
<span class="t" style="left:42.00px;top:87.30px;transform:translateY(-50%) scale(0.450,0.510);color:#444;">Post</span>
<span class="t" style="left:42.00px;top:95.60px;transform:translateY(-50%) scale(0.467,0.510);color:#444;">Setup</span>
<span class="t" style="left:77.70px;top:78.90px;transform:translateY(-50%) scale(0.452,0.510);color:#444;">Stock</span>
<span class="t" style="left:77.70px;top:87.30px;transform:translateY(-50%) scale(0.481,0.510);color:#444;">Align</span>
<span class="t" style="left:77.70px;top:95.60px;transform:translateY(-50%) scale(0.486,0.510);color:#444;">Material</span>
<span class="t" style="left:112.40px;top:78.90px;transform:translateY(-50%) scale(0.465,0.510);color:#444;">Work Zero</span>
<span class="t" style="left:112.40px;top:87.30px;transform:translateY(-50%) scale(0.446,0.510);color:#444;">2 Axis</span>
<span class="t" style="left:110.00px;top:95.60px;transform:translateY(-50%) scale(0.472,0.510);color:#444;">3 Axis Adv</span>
<span class="t" style="left:150.40px;top:78.90px;transform:translateY(-50%) scale(0.446,0.510);color:#444;">4 Axis</span>
<span class="t" style="left:150.40px;top:87.30px;transform:translateY(-50%) scale(0.446,0.510);color:#444;">5 Axis</span>
<span class="t" style="left:150.40px;top:95.60px;transform:translateY(-50%) scale(0.438,0.510);color:#444;">Holes</span>
<span class="t" style="left:29.80px;top:106.10px;transform:translateY(-50%) scale(0.468,0.510);color:#8a8e98;">Machine Setup</span>
<span class="t" style="left:75.40px;top:106.10px;transform:translateY(-50%) scale(0.448,0.510);color:#8a8e98;">Stock</span>
<span class="t" style="left:118.00px;top:106.10px;transform:translateY(-50%) scale(0.479,0.510);color:#8a8e98;">Machining Operations</span>
<span class="t" style="left:49.00px;top:115.40px;transform:translateY(-50%) scale(0.449,0.510);font-weight:bold;color:#111;">Machining Job</span>
<span class="t" style="left:60.50px;top:123.40px;transform:translateY(-50%) scale(0.478,0.510);color:#333;">Machine - 3 Axis</span>
<span class="t" style="left:60.50px;top:131.40px;transform:translateY(-50%) scale(0.446,0.510);font-weight:bold;color:#111;">Post - Haas</span>
<span class="t" style="left:60.50px;top:139.40px;transform:translateY(-50%) scale(0.460,0.510);color:#333;">Stock - Box Stock</span>
<span class="t" style="left:60.50px;top:147.40px;transform:translateY(-50%) scale(0.468,0.510);color:#333;">Fixtures - None</span>
<span class="t" style="left:58.00px;top:155.40px;transform:translateY(-50%) scale(0.471,0.510);font-weight:bold;color:#111;">Setup 1</span>
<span class="t" style="left:67.30px;top:163.40px;transform:translateY(-50%) scale(0.462,0.510);color:#333;">Work Zero</span>
<span class="t" style="left:67.00px;top:171.40px;transform:translateY(-50%) scale(0.455,0.510);color:#333;">b1st sheet</span>
<span class="t" style="left:76.00px;top:179.40px;transform:translateY(-50%) scale(0.470,0.510);color:#333;">Standard Drill</span>
<span class="t" style="left:78.00px;top:187.40px;transform:translateY(-50%) scale(0.460,0.510);color:#333;">Internal 1</span>
<span class="t" style="left:78.00px;top:195.40px;transform:translateY(-50%) scale(0.473,0.510);color:#333;">Internal-2</span>
<span class="t" style="left:76.00px;top:203.40px;transform:translateY(-50%) scale(0.473,0.510);color:#333;">Engraving</span>
<span class="t" style="left:76.00px;top:211.40px;transform:translateY(-50%) scale(0.475,0.510);color:#333;">4mm Rebate</span>
<span class="t" style="left:76.00px;top:219.40px;transform:translateY(-50%) scale(0.481,0.510);color:#333;">doors internal short</span>
<span class="t" style="left:76.00px;top:227.40px;transform:translateY(-50%) scale(0.466,0.510);color:#333;">Doors External</span>
<span class="t" style="left:76.00px;top:235.40px;transform:translateY(-50%) scale(0.483,0.510);color:#333;">Internal2</span>
<span class="t" style="left:76.00px;top:243.40px;transform:translateY(-50%) scale(0.450,0.510);color:#333;">External 3.175</span>
<span class="t" style="left:76.00px;top:251.40px;transform:translateY(-50%) scale(0.463,0.510);color:#333;">External</span>
<span class="t" style="left:76.20px;top:259.40px;transform:translateY(-50%) scale(0.520,0.520);color:#333;">Trim</span>
<span class="t" style="left:35.00px;top:292.30px;transform:translateY(-50%) scale(0.478,0.510);color:#777b84;">RhinoCAM 2023 - Machining Objects</span>
<span class="t" style="left:43.60px;top:304.20px;transform:translateY(-50%) scale(0.475,0.510);color:#333;">Tools</span>
<span class="t" style="left:70.60px;top:304.20px;transform:translateY(-50%) scale(0.447,0.510);color:#444;">Regions</span>
<span class="t" style="left:103.00px;top:304.20px;transform:translateY(-50%) scale(0.431,0.510);color:#444;">Features</span>
<span class="t" style="left:136.00px;top:304.20px;transform:translateY(-50%) scale(0.423,0.510);color:#444;">K-Bases</span>
<span class="t" style="left:49.40px;top:326.80px;transform:translateY(-50%) scale(0.432,0.510);font-weight:bold;color:#fff;">Tools</span>
<span class="t" style="left:58.00px;top:335.20px;transform:translateY(-50%) scale(0.433,0.510);color:#222;">ocal#13 45deg VeeMill</span>
<span class="t" style="left:58.00px;top:343.20px;transform:translateY(-50%) scale(0.435,0.510);color:#222;">ocal#06DWN Downcut 6mm</span>
<span class="t" style="left:58.00px;top:351.20px;transform:translateY(-50%) scale(0.443,0.510);color:#222;">ocal#03DWN Downcut 3.0</span>
<span class="t" style="left:58.00px;top:359.20px;transform:translateY(-50%) scale(0.415,0.510);color:#222;">ocal#06CMP Compression 6mm</span>
<span class="t" style="left:58.00px;top:367.00px;transform:translateY(-50%) scale(0.426,0.510);color:#222;">ocal#03 Compression 3.175</span>
<span class="t" style="left:30.00px;top:376.70px;transform:translateY(-50%) scale(0.472,0.510);color:#333;">No Sort</span>
<span class="t" style="left:192.40px;top:57.70px;transform:translateY(-50%) scale(0.509,0.510);color:#2a3a7a;">Top</span>
<span class="t" style="left:205.60px;top:355.80px;transform:translateY(-50%) scale(0.460,0.510);color:#5a6068;">y</span>
<span class="t" style="left:217.40px;top:368.40px;transform:translateY(-50%) scale(0.460,0.510);color:#5a6068;">x</span>
<span class="t" style="left:691.80px;top:57.70px;transform:translateY(-50%) scale(0.426,0.510);color:#6a6e78;">Layers</span>
<span class="t" style="left:692.80px;top:88.40px;transform:translateY(-50%) scale(0.440,0.510);color:#444;">Layer</span>
<span class="t" style="left:739.00px;top:88.40px;transform:translateY(-50%) scale(0.418,0.510);color:#444;">C...</span>
<span class="t" style="left:756.50px;top:88.40px;transform:translateY(-50%) scale(0.411,0.510);color:#444;">Lo...</span>
<span class="t" style="left:700.20px;top:96.80px;transform:translateY(-50%) scale(0.485,0.510);font-weight:bold;color:#222;">0</span>
<span class="t" style="left:699.80px;top:104.60px;transform:translateY(-50%) scale(0.484,0.510);color:#444;">Drill through 2.5</span>
<span class="t" style="left:699.80px;top:112.20px;transform:translateY(-50%) scale(0.451,0.510);color:#444;">Engrave</span>
<span class="t" style="left:699.80px;top:119.70px;transform:translateY(-50%) scale(0.458,0.510);color:#444;">External</span>
<span class="t" style="left:699.80px;top:127.20px;transform:translateY(-50%) scale(0.480,0.510);color:#444;">Internal</span>
<span class="t" style="left:699.80px;top:134.70px;transform:translateY(-50%) scale(0.439,0.510);color:#444;">Rebate 4</span>
<span class="t" style="left:699.80px;top:142.20px;transform:translateY(-50%) scale(0.457,0.510);color:#444;">Doors</span>
<span class="t" style="left:699.80px;top:149.70px;transform:translateY(-50%) scale(0.469,0.510);color:#444;">Text</span>
<span class="t" style="left:706.50px;top:157.30px;transform:translateY(-50%) scale(0.489,0.510);color:#444;">Outline</span>
</div></body></html>
